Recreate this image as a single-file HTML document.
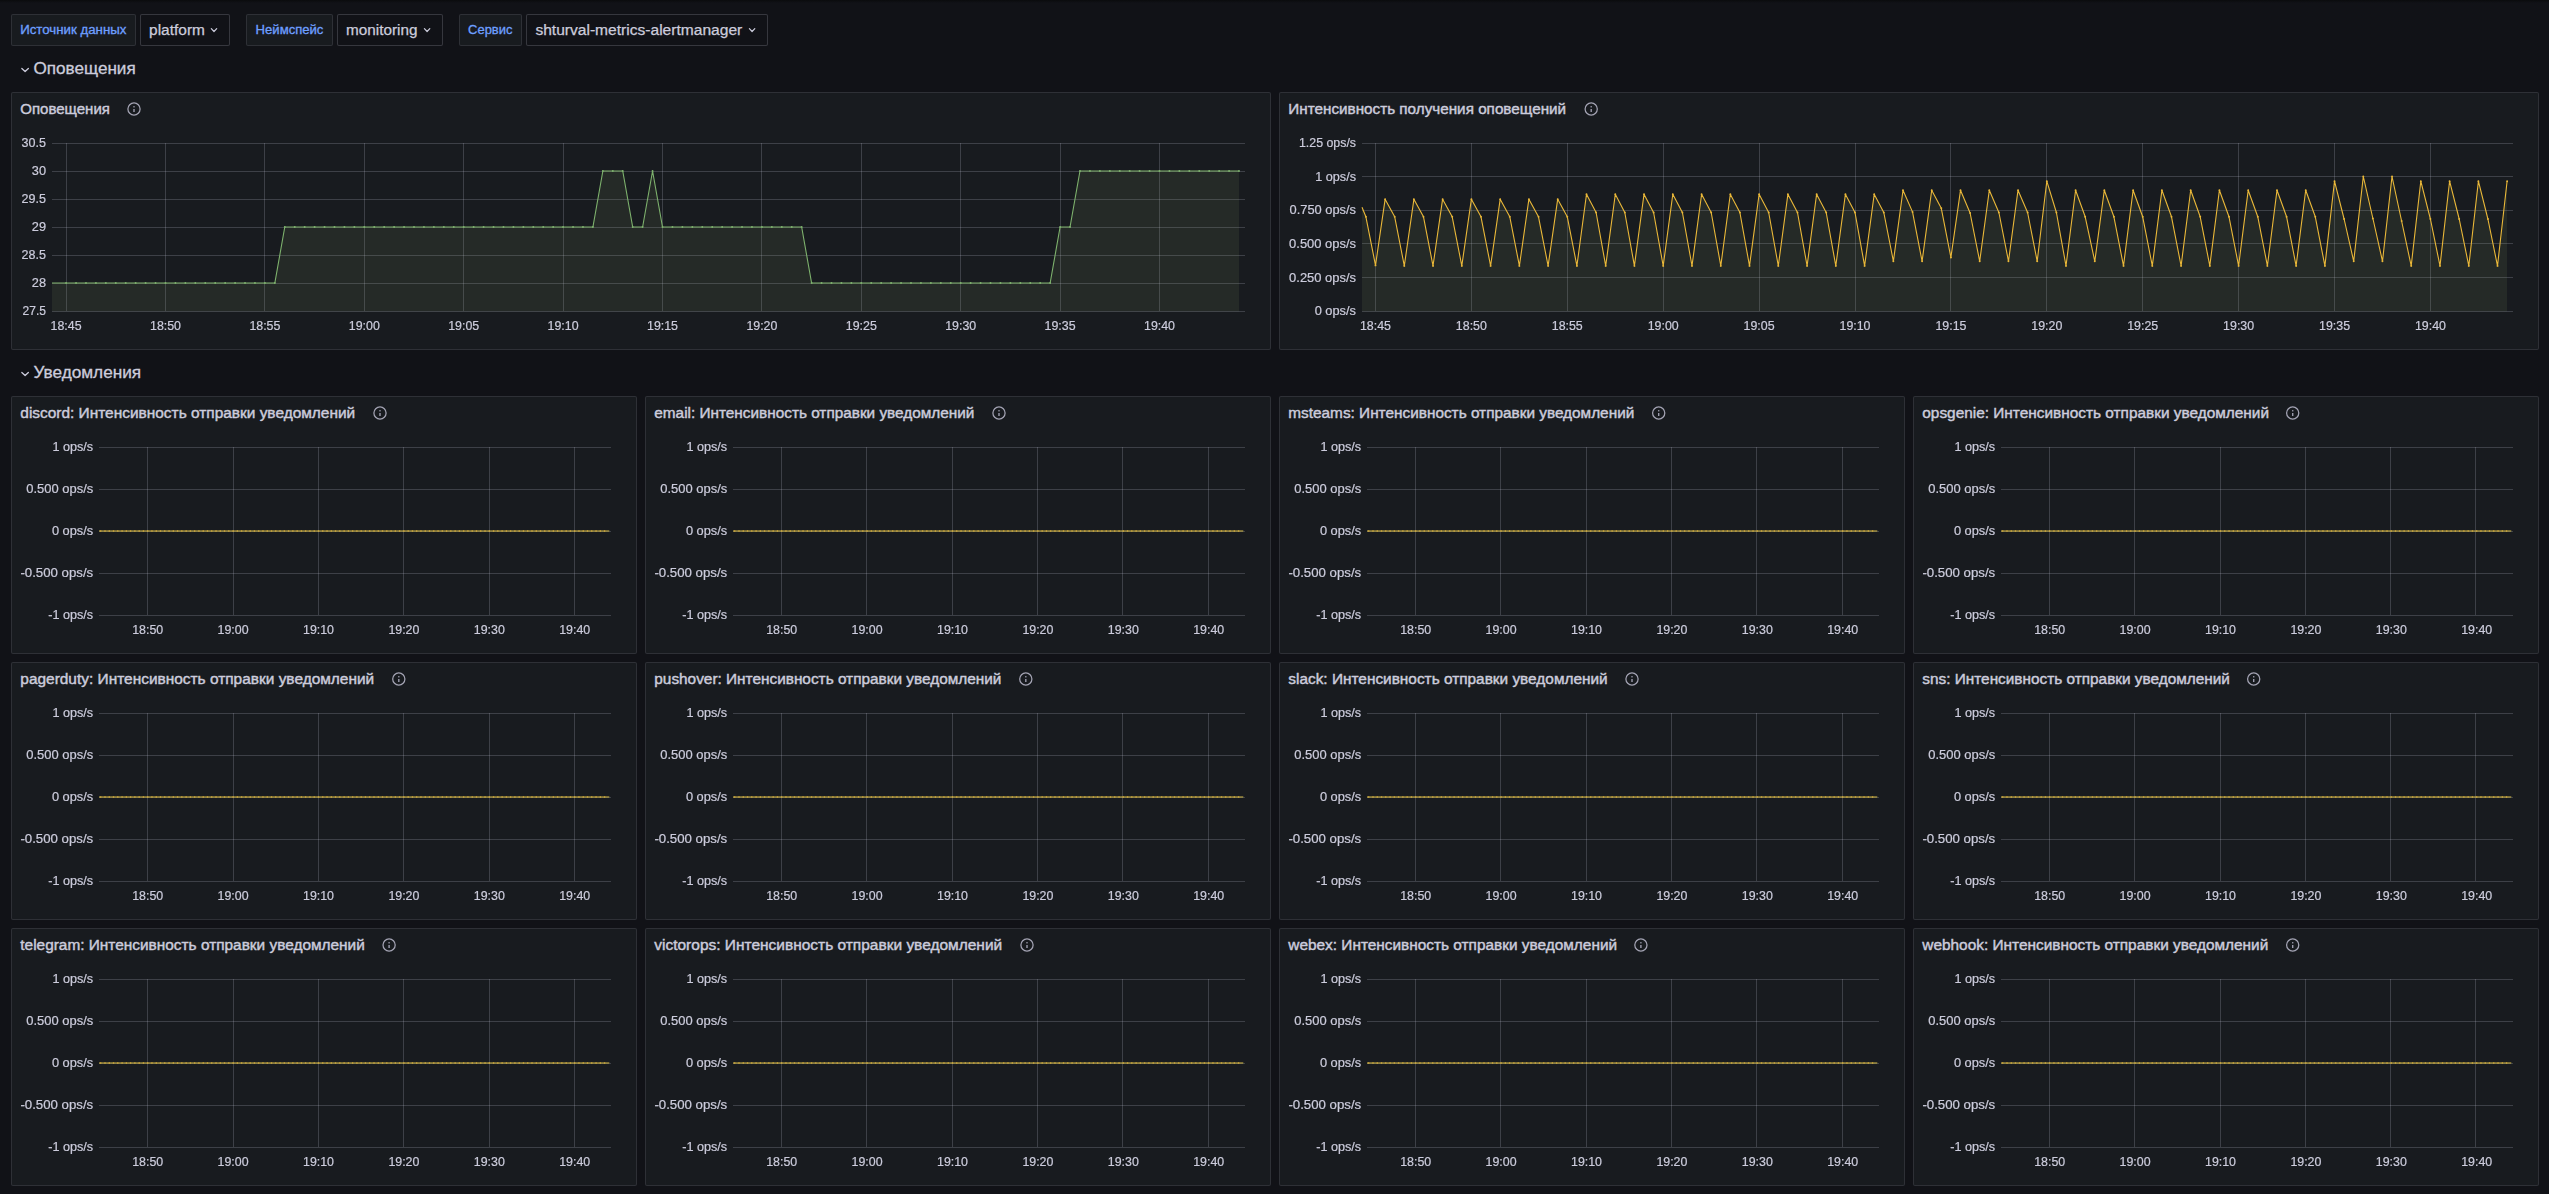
<!DOCTYPE html><html><head><meta charset="utf-8"><title>Grafana dashboard</title><style>
html,body{margin:0;padding:0;background:#111217;width:2549px;height:1194px;overflow:hidden;font-family:"Liberation Sans", sans-serif;}
.topshade{position:absolute;left:0;top:0;width:100%;height:3px;background:linear-gradient(#0a0b0d,#111217);}
.box{position:absolute;box-sizing:border-box;border-radius:2px;}
.lbl{background:#181b1f;border:1px solid rgba(204,204,220,0.12);}
.inp{background:#111217;border:1px solid rgba(204,204,220,0.2);}
.panel{position:absolute;box-sizing:border-box;background:#181b1f;border:1px solid rgba(204,204,220,0.12);border-radius:2px;}
svg{position:absolute;left:0;top:0;overflow:visible;}
text{font-family:"Liberation Sans", sans-serif;}
</style></head><body>
<div class="topshade"></div>
<div class="box lbl" style="left:11px;top:14px;width:125px;height:32px;"></div>
<div class="box inp" style="left:140px;top:14px;width:90px;height:32px;"></div>
<div class="box lbl" style="left:246px;top:14px;width:87px;height:32px;"></div>
<div class="box inp" style="left:337px;top:14px;width:106px;height:32px;"></div>
<div class="box lbl" style="left:459px;top:14px;width:63px;height:32px;"></div>
<div class="box inp" style="left:526px;top:14px;width:242px;height:32px;"></div>
<svg width="2549" height="1194" viewBox="0 0 2549 1194"><text x="20.20" y="34.20" font-size="12" fill="#6e9fff" stroke="#6e9fff" stroke-width="0.3" textLength="106.20" lengthAdjust="spacingAndGlyphs">Источник данных</text><text x="149.10" y="35.00" font-size="14" fill="#ccccdc" stroke="#ccccdc" stroke-width="0.25" textLength="55.80" lengthAdjust="spacingAndGlyphs">platform</text><path d="M211.30 28.6 L214.00 31.5 L216.70 28.6" fill="none" stroke="#ccccdc" stroke-width="1.2" stroke-linecap="round" stroke-linejoin="round"/><text x="255.60" y="34.20" font-size="12" fill="#6e9fff" stroke="#6e9fff" stroke-width="0.3" textLength="67.80" lengthAdjust="spacingAndGlyphs">Неймспейс</text><text x="346.00" y="35.00" font-size="14" fill="#ccccdc" stroke="#ccccdc" stroke-width="0.25" textLength="71.40" lengthAdjust="spacingAndGlyphs">monitoring</text><path d="M424.40 28.6 L427.10 31.5 L429.80 28.6" fill="none" stroke="#ccccdc" stroke-width="1.2" stroke-linecap="round" stroke-linejoin="round"/><text x="468.10" y="34.20" font-size="12" fill="#6e9fff" stroke="#6e9fff" stroke-width="0.3" textLength="44.30" lengthAdjust="spacingAndGlyphs">Сервис</text><text x="535.40" y="35.00" font-size="14" fill="#ccccdc" stroke="#ccccdc" stroke-width="0.25" textLength="206.90" lengthAdjust="spacingAndGlyphs">shturval-metrics-alertmanager</text><path d="M749.40 28.6 L752.10 31.5 L754.80 28.6" fill="none" stroke="#ccccdc" stroke-width="1.2" stroke-linecap="round" stroke-linejoin="round"/><path d="M21.85 68.55 L25.1 71.55 L28.35 68.55" fill="none" stroke="#ccccdc" stroke-width="1.3" stroke-linecap="round" stroke-linejoin="round"/><text x="33.50" y="73.80" font-size="16" fill="#ccccdc" stroke="#ccccdc" stroke-width="0.3" textLength="102.20" lengthAdjust="spacingAndGlyphs">Оповещения</text><path d="M21.85 372.55 L25.1 375.55 L28.35 372.55" fill="none" stroke="#ccccdc" stroke-width="1.3" stroke-linecap="round" stroke-linejoin="round"/><text x="33.50" y="377.80" font-size="16" fill="#ccccdc" stroke="#ccccdc" stroke-width="0.3" textLength="107.70" lengthAdjust="spacingAndGlyphs">Уведомления</text></svg>
<div class="panel" style="left:11px;top:92px;width:1260px;height:258px;"></div>
<svg width="2549" height="1194" style="left:0;top:0" viewBox="0 0 2549 1194"><text x="20.30" y="114.20" font-size="14" fill="#ccccdc" stroke="#ccccdc" stroke-width="0.4" textLength="89.60" lengthAdjust="spacingAndGlyphs">Оповещения</text><circle cx="134.00" cy="109.00" r="6.1" fill="none" stroke="#a4a4b4" stroke-width="1.25"/><rect x="133.30" y="109.00" width="1.4" height="3.0" fill="#9d9dae"/><rect x="133.30" y="106.10" width="1.4" height="1.3" fill="#9d9dae"/><line x1="52" y1="143.5" x2="1245" y2="143.5" stroke="rgba(204,204,220,0.21)" stroke-width="1"/><line x1="52" y1="171.5" x2="1245" y2="171.5" stroke="rgba(204,204,220,0.21)" stroke-width="1"/><line x1="52" y1="199.5" x2="1245" y2="199.5" stroke="rgba(204,204,220,0.21)" stroke-width="1"/><line x1="52" y1="227.5" x2="1245" y2="227.5" stroke="rgba(204,204,220,0.21)" stroke-width="1"/><line x1="52" y1="255.5" x2="1245" y2="255.5" stroke="rgba(204,204,220,0.21)" stroke-width="1"/><line x1="52" y1="283.5" x2="1245" y2="283.5" stroke="rgba(204,204,220,0.21)" stroke-width="1"/><line x1="52" y1="311.5" x2="1245" y2="311.5" stroke="rgba(204,204,220,0.21)" stroke-width="1"/><line x1="66.5" y1="143" x2="66.5" y2="311" stroke="rgba(204,204,220,0.21)" stroke-width="1"/><line x1="165.5" y1="143" x2="165.5" y2="311" stroke="rgba(204,204,220,0.21)" stroke-width="1"/><line x1="264.5" y1="143" x2="264.5" y2="311" stroke="rgba(204,204,220,0.21)" stroke-width="1"/><line x1="364.5" y1="143" x2="364.5" y2="311" stroke="rgba(204,204,220,0.21)" stroke-width="1"/><line x1="463.5" y1="143" x2="463.5" y2="311" stroke="rgba(204,204,220,0.21)" stroke-width="1"/><line x1="563.5" y1="143" x2="563.5" y2="311" stroke="rgba(204,204,220,0.21)" stroke-width="1"/><line x1="662.5" y1="143" x2="662.5" y2="311" stroke="rgba(204,204,220,0.21)" stroke-width="1"/><line x1="761.5" y1="143" x2="761.5" y2="311" stroke="rgba(204,204,220,0.21)" stroke-width="1"/><line x1="861.5" y1="143" x2="861.5" y2="311" stroke="rgba(204,204,220,0.21)" stroke-width="1"/><line x1="960.5" y1="143" x2="960.5" y2="311" stroke="rgba(204,204,220,0.21)" stroke-width="1"/><line x1="1060.5" y1="143" x2="1060.5" y2="311" stroke="rgba(204,204,220,0.21)" stroke-width="1"/><line x1="1159.5" y1="143" x2="1159.5" y2="311" stroke="rgba(204,204,220,0.21)" stroke-width="1"/><path d="M52.00 283.0 L56.16 283.0 L66.10 283.0 L76.04 283.0 L85.98 283.0 L95.92 283.0 L105.86 283.0 L115.80 283.0 L125.74 283.0 L135.68 283.0 L145.62 283.0 L155.56 283.0 L165.50 283.0 L175.44 283.0 L185.38 283.0 L195.32 283.0 L205.26 283.0 L215.20 283.0 L225.14 283.0 L235.08 283.0 L245.02 283.0 L254.96 283.0 L264.90 283.0 L274.84 283.0 L284.78 227.0 L294.72 227.0 L304.66 227.0 L314.60 227.0 L324.54 227.0 L334.48 227.0 L344.42 227.0 L354.36 227.0 L364.30 227.0 L374.24 227.0 L384.18 227.0 L394.12 227.0 L404.06 227.0 L414.00 227.0 L423.94 227.0 L433.88 227.0 L443.82 227.0 L453.76 227.0 L463.70 227.0 L473.64 227.0 L483.58 227.0 L493.52 227.0 L503.46 227.0 L513.40 227.0 L523.34 227.0 L533.28 227.0 L543.22 227.0 L553.16 227.0 L563.10 227.0 L573.04 227.0 L582.98 227.0 L592.92 227.0 L602.86 171.0 L612.80 171.0 L622.74 171.0 L632.68 227.0 L642.62 227.0 L652.56 171.0 L662.50 227.0 L672.44 227.0 L682.38 227.0 L692.32 227.0 L702.26 227.0 L712.20 227.0 L722.14 227.0 L732.08 227.0 L742.02 227.0 L751.96 227.0 L761.90 227.0 L771.84 227.0 L781.78 227.0 L791.72 227.0 L801.66 227.0 L811.60 283.0 L821.54 283.0 L831.48 283.0 L841.42 283.0 L851.36 283.0 L861.30 283.0 L871.24 283.0 L881.18 283.0 L891.12 283.0 L901.06 283.0 L911.00 283.0 L920.94 283.0 L930.88 283.0 L940.82 283.0 L950.76 283.0 L960.70 283.0 L970.64 283.0 L980.58 283.0 L990.52 283.0 L1000.46 283.0 L1010.40 283.0 L1020.34 283.0 L1030.28 283.0 L1040.22 283.0 L1050.16 283.0 L1060.10 227.0 L1070.04 227.0 L1079.98 171.0 L1089.92 171.0 L1099.86 171.0 L1109.80 171.0 L1119.74 171.0 L1129.68 171.0 L1139.62 171.0 L1149.56 171.0 L1159.50 171.0 L1169.44 171.0 L1179.38 171.0 L1189.32 171.0 L1199.26 171.0 L1209.20 171.0 L1219.14 171.0 L1229.08 171.0 L1239.02 171.0 L1239.02 311.5 L52 311.5 Z" fill="rgba(154,177,121,0.10)" stroke="none"/><path d="M52.00 283.0 L56.16 283.0 L66.10 283.0 L76.04 283.0 L85.98 283.0 L95.92 283.0 L105.86 283.0 L115.80 283.0 L125.74 283.0 L135.68 283.0 L145.62 283.0 L155.56 283.0 L165.50 283.0 L175.44 283.0 L185.38 283.0 L195.32 283.0 L205.26 283.0 L215.20 283.0 L225.14 283.0 L235.08 283.0 L245.02 283.0 L254.96 283.0 L264.90 283.0 L274.84 283.0 L284.78 227.0 L294.72 227.0 L304.66 227.0 L314.60 227.0 L324.54 227.0 L334.48 227.0 L344.42 227.0 L354.36 227.0 L364.30 227.0 L374.24 227.0 L384.18 227.0 L394.12 227.0 L404.06 227.0 L414.00 227.0 L423.94 227.0 L433.88 227.0 L443.82 227.0 L453.76 227.0 L463.70 227.0 L473.64 227.0 L483.58 227.0 L493.52 227.0 L503.46 227.0 L513.40 227.0 L523.34 227.0 L533.28 227.0 L543.22 227.0 L553.16 227.0 L563.10 227.0 L573.04 227.0 L582.98 227.0 L592.92 227.0 L602.86 171.0 L612.80 171.0 L622.74 171.0 L632.68 227.0 L642.62 227.0 L652.56 171.0 L662.50 227.0 L672.44 227.0 L682.38 227.0 L692.32 227.0 L702.26 227.0 L712.20 227.0 L722.14 227.0 L732.08 227.0 L742.02 227.0 L751.96 227.0 L761.90 227.0 L771.84 227.0 L781.78 227.0 L791.72 227.0 L801.66 227.0 L811.60 283.0 L821.54 283.0 L831.48 283.0 L841.42 283.0 L851.36 283.0 L861.30 283.0 L871.24 283.0 L881.18 283.0 L891.12 283.0 L901.06 283.0 L911.00 283.0 L920.94 283.0 L930.88 283.0 L940.82 283.0 L950.76 283.0 L960.70 283.0 L970.64 283.0 L980.58 283.0 L990.52 283.0 L1000.46 283.0 L1010.40 283.0 L1020.34 283.0 L1030.28 283.0 L1040.22 283.0 L1050.16 283.0 L1060.10 227.0 L1070.04 227.0 L1079.98 171.0 L1089.92 171.0 L1099.86 171.0 L1109.80 171.0 L1119.74 171.0 L1129.68 171.0 L1139.62 171.0 L1149.56 171.0 L1159.50 171.0 L1169.44 171.0 L1179.38 171.0 L1189.32 171.0 L1199.26 171.0 L1209.20 171.0 L1219.14 171.0 L1229.08 171.0 L1239.02 171.0" fill="none" stroke="#7eb26d" stroke-width="1.1" stroke-linejoin="round"/><g fill="#7eb26d"><circle cx="66.10" cy="283.0" r="0.95"/><circle cx="76.04" cy="283.0" r="0.95"/><circle cx="85.98" cy="283.0" r="0.95"/><circle cx="95.92" cy="283.0" r="0.95"/><circle cx="105.86" cy="283.0" r="0.95"/><circle cx="115.80" cy="283.0" r="0.95"/><circle cx="125.74" cy="283.0" r="0.95"/><circle cx="135.68" cy="283.0" r="0.95"/><circle cx="145.62" cy="283.0" r="0.95"/><circle cx="155.56" cy="283.0" r="0.95"/><circle cx="165.50" cy="283.0" r="0.95"/><circle cx="175.44" cy="283.0" r="0.95"/><circle cx="185.38" cy="283.0" r="0.95"/><circle cx="195.32" cy="283.0" r="0.95"/><circle cx="205.26" cy="283.0" r="0.95"/><circle cx="215.20" cy="283.0" r="0.95"/><circle cx="225.14" cy="283.0" r="0.95"/><circle cx="235.08" cy="283.0" r="0.95"/><circle cx="245.02" cy="283.0" r="0.95"/><circle cx="254.96" cy="283.0" r="0.95"/><circle cx="264.90" cy="283.0" r="0.95"/><circle cx="274.84" cy="283.0" r="0.95"/><circle cx="284.78" cy="227.0" r="0.95"/><circle cx="294.72" cy="227.0" r="0.95"/><circle cx="304.66" cy="227.0" r="0.95"/><circle cx="314.60" cy="227.0" r="0.95"/><circle cx="324.54" cy="227.0" r="0.95"/><circle cx="334.48" cy="227.0" r="0.95"/><circle cx="344.42" cy="227.0" r="0.95"/><circle cx="354.36" cy="227.0" r="0.95"/><circle cx="364.30" cy="227.0" r="0.95"/><circle cx="374.24" cy="227.0" r="0.95"/><circle cx="384.18" cy="227.0" r="0.95"/><circle cx="394.12" cy="227.0" r="0.95"/><circle cx="404.06" cy="227.0" r="0.95"/><circle cx="414.00" cy="227.0" r="0.95"/><circle cx="423.94" cy="227.0" r="0.95"/><circle cx="433.88" cy="227.0" r="0.95"/><circle cx="443.82" cy="227.0" r="0.95"/><circle cx="453.76" cy="227.0" r="0.95"/><circle cx="463.70" cy="227.0" r="0.95"/><circle cx="473.64" cy="227.0" r="0.95"/><circle cx="483.58" cy="227.0" r="0.95"/><circle cx="493.52" cy="227.0" r="0.95"/><circle cx="503.46" cy="227.0" r="0.95"/><circle cx="513.40" cy="227.0" r="0.95"/><circle cx="523.34" cy="227.0" r="0.95"/><circle cx="533.28" cy="227.0" r="0.95"/><circle cx="543.22" cy="227.0" r="0.95"/><circle cx="553.16" cy="227.0" r="0.95"/><circle cx="563.10" cy="227.0" r="0.95"/><circle cx="573.04" cy="227.0" r="0.95"/><circle cx="582.98" cy="227.0" r="0.95"/><circle cx="592.92" cy="227.0" r="0.95"/><circle cx="602.86" cy="171.0" r="0.95"/><circle cx="612.80" cy="171.0" r="0.95"/><circle cx="622.74" cy="171.0" r="0.95"/><circle cx="632.68" cy="227.0" r="0.95"/><circle cx="642.62" cy="227.0" r="0.95"/><circle cx="652.56" cy="171.0" r="0.95"/><circle cx="662.50" cy="227.0" r="0.95"/><circle cx="672.44" cy="227.0" r="0.95"/><circle cx="682.38" cy="227.0" r="0.95"/><circle cx="692.32" cy="227.0" r="0.95"/><circle cx="702.26" cy="227.0" r="0.95"/><circle cx="712.20" cy="227.0" r="0.95"/><circle cx="722.14" cy="227.0" r="0.95"/><circle cx="732.08" cy="227.0" r="0.95"/><circle cx="742.02" cy="227.0" r="0.95"/><circle cx="751.96" cy="227.0" r="0.95"/><circle cx="761.90" cy="227.0" r="0.95"/><circle cx="771.84" cy="227.0" r="0.95"/><circle cx="781.78" cy="227.0" r="0.95"/><circle cx="791.72" cy="227.0" r="0.95"/><circle cx="801.66" cy="227.0" r="0.95"/><circle cx="811.60" cy="283.0" r="0.95"/><circle cx="821.54" cy="283.0" r="0.95"/><circle cx="831.48" cy="283.0" r="0.95"/><circle cx="841.42" cy="283.0" r="0.95"/><circle cx="851.36" cy="283.0" r="0.95"/><circle cx="861.30" cy="283.0" r="0.95"/><circle cx="871.24" cy="283.0" r="0.95"/><circle cx="881.18" cy="283.0" r="0.95"/><circle cx="891.12" cy="283.0" r="0.95"/><circle cx="901.06" cy="283.0" r="0.95"/><circle cx="911.00" cy="283.0" r="0.95"/><circle cx="920.94" cy="283.0" r="0.95"/><circle cx="930.88" cy="283.0" r="0.95"/><circle cx="940.82" cy="283.0" r="0.95"/><circle cx="950.76" cy="283.0" r="0.95"/><circle cx="960.70" cy="283.0" r="0.95"/><circle cx="970.64" cy="283.0" r="0.95"/><circle cx="980.58" cy="283.0" r="0.95"/><circle cx="990.52" cy="283.0" r="0.95"/><circle cx="1000.46" cy="283.0" r="0.95"/><circle cx="1010.40" cy="283.0" r="0.95"/><circle cx="1020.34" cy="283.0" r="0.95"/><circle cx="1030.28" cy="283.0" r="0.95"/><circle cx="1040.22" cy="283.0" r="0.95"/><circle cx="1050.16" cy="283.0" r="0.95"/><circle cx="1060.10" cy="227.0" r="0.95"/><circle cx="1070.04" cy="227.0" r="0.95"/><circle cx="1079.98" cy="171.0" r="0.95"/><circle cx="1089.92" cy="171.0" r="0.95"/><circle cx="1099.86" cy="171.0" r="0.95"/><circle cx="1109.80" cy="171.0" r="0.95"/><circle cx="1119.74" cy="171.0" r="0.95"/><circle cx="1129.68" cy="171.0" r="0.95"/><circle cx="1139.62" cy="171.0" r="0.95"/><circle cx="1149.56" cy="171.0" r="0.95"/><circle cx="1159.50" cy="171.0" r="0.95"/><circle cx="1169.44" cy="171.0" r="0.95"/><circle cx="1179.38" cy="171.0" r="0.95"/><circle cx="1189.32" cy="171.0" r="0.95"/><circle cx="1199.26" cy="171.0" r="0.95"/><circle cx="1209.20" cy="171.0" r="0.95"/><circle cx="1219.14" cy="171.0" r="0.95"/><circle cx="1229.08" cy="171.0" r="0.95"/><circle cx="1239.02" cy="171.0" r="0.95"/></g></svg>
<div class="panel" style="left:1279px;top:92px;width:1260px;height:258px;"></div>
<svg width="2549" height="1194" style="left:0;top:0" viewBox="0 0 2549 1194"><text x="1288.30" y="114.20" font-size="14" fill="#ccccdc" stroke="#ccccdc" stroke-width="0.4" textLength="277.80" lengthAdjust="spacingAndGlyphs">Интенсивность получения оповещений</text><circle cx="1591.20" cy="109.00" r="6.1" fill="none" stroke="#a4a4b4" stroke-width="1.25"/><rect x="1590.50" y="109.00" width="1.4" height="3.0" fill="#9d9dae"/><rect x="1590.50" y="106.10" width="1.4" height="1.3" fill="#9d9dae"/><line x1="1362" y1="143.5" x2="2513" y2="143.5" stroke="rgba(204,204,220,0.21)" stroke-width="1"/><line x1="1362" y1="176.5" x2="2513" y2="176.5" stroke="rgba(204,204,220,0.21)" stroke-width="1"/><line x1="1362" y1="210.5" x2="2513" y2="210.5" stroke="rgba(204,204,220,0.21)" stroke-width="1"/><line x1="1362" y1="243.5" x2="2513" y2="243.5" stroke="rgba(204,204,220,0.21)" stroke-width="1"/><line x1="1362" y1="277.5" x2="2513" y2="277.5" stroke="rgba(204,204,220,0.21)" stroke-width="1"/><line x1="1362" y1="311.5" x2="2513" y2="311.5" stroke="rgba(204,204,220,0.21)" stroke-width="1"/><line x1="1375.5" y1="143" x2="1375.5" y2="311" stroke="rgba(204,204,220,0.21)" stroke-width="1"/><line x1="1471.5" y1="143" x2="1471.5" y2="311" stroke="rgba(204,204,220,0.21)" stroke-width="1"/><line x1="1567.5" y1="143" x2="1567.5" y2="311" stroke="rgba(204,204,220,0.21)" stroke-width="1"/><line x1="1663.5" y1="143" x2="1663.5" y2="311" stroke="rgba(204,204,220,0.21)" stroke-width="1"/><line x1="1759.5" y1="143" x2="1759.5" y2="311" stroke="rgba(204,204,220,0.21)" stroke-width="1"/><line x1="1855.5" y1="143" x2="1855.5" y2="311" stroke="rgba(204,204,220,0.21)" stroke-width="1"/><line x1="1950.5" y1="143" x2="1950.5" y2="311" stroke="rgba(204,204,220,0.21)" stroke-width="1"/><line x1="2046.5" y1="143" x2="2046.5" y2="311" stroke="rgba(204,204,220,0.21)" stroke-width="1"/><line x1="2142.5" y1="143" x2="2142.5" y2="311" stroke="rgba(204,204,220,0.21)" stroke-width="1"/><line x1="2238.5" y1="143" x2="2238.5" y2="311" stroke="rgba(204,204,220,0.21)" stroke-width="1"/><line x1="2334.5" y1="143" x2="2334.5" y2="311" stroke="rgba(204,204,220,0.21)" stroke-width="1"/><line x1="2430.5" y1="143" x2="2430.5" y2="311" stroke="rgba(204,204,220,0.21)" stroke-width="1"/><path d="M1362.0 207.3 L1365.9 216.8 L1375.5 265.4 L1385.1 199.3 L1394.7 216.8 L1404.3 265.9 L1413.9 199.3 L1423.5 216.8 L1433.0 265.9 L1442.6 199.2 L1452.2 216.8 L1461.8 265.9 L1471.4 199.2 L1481.0 216.8 L1490.6 265.9 L1500.2 199.2 L1509.8 216.8 L1519.4 265.9 L1528.9 199.2 L1538.5 216.8 L1548.1 265.9 L1557.7 199.2 L1567.3 216.8 L1576.9 265.9 L1586.5 194.3 L1596.1 212.5 L1605.7 265.9 L1615.3 194.3 L1624.8 212.5 L1634.4 265.9 L1644.0 194.3 L1653.6 212.5 L1663.2 265.9 L1672.8 194.3 L1682.4 212.5 L1692.0 265.9 L1701.6 194.3 L1711.2 212.5 L1720.8 265.9 L1730.3 194.3 L1739.9 212.5 L1749.5 265.9 L1759.1 194.3 L1768.7 212.5 L1778.3 265.9 L1787.9 194.3 L1797.5 212.5 L1807.1 265.9 L1816.6 194.3 L1826.2 212.5 L1835.8 265.9 L1845.4 194.3 L1855.0 212.5 L1864.6 265.9 L1874.2 194.3 L1883.8 212.5 L1893.4 261.3 L1903.0 190.3 L1912.5 211.9 L1922.1 261.3 L1931.7 190.3 L1941.3 208.3 L1950.9 257.5 L1960.5 190.3 L1970.1 213.0 L1979.7 261.3 L1989.3 190.3 L1998.9 212.5 L2008.5 261.3 L2018.0 190.3 L2027.6 212.5 L2037.2 261.3 L2046.8 181.2 L2056.4 212.5 L2066.0 265.9 L2075.6 190.3 L2085.2 216.8 L2094.8 261.3 L2104.3 190.3 L2113.9 216.8 L2123.5 265.9 L2133.1 190.3 L2142.7 216.8 L2152.3 265.9 L2161.9 190.3 L2171.5 216.8 L2181.1 265.9 L2190.7 190.3 L2200.2 216.8 L2209.8 265.9 L2219.4 190.3 L2229.0 216.8 L2238.6 265.9 L2248.2 190.3 L2257.8 216.8 L2267.4 265.9 L2277.0 190.3 L2286.6 216.8 L2296.1 265.9 L2305.7 190.3 L2315.3 216.8 L2324.9 265.9 L2334.5 181.2 L2344.1 219.0 L2353.7 261.3 L2363.3 176.5 L2372.9 218.5 L2382.5 261.3 L2392.0 176.5 L2401.6 221.0 L2411.2 265.9 L2420.8 181.2 L2430.4 219.0 L2440.0 265.9 L2449.6 181.2 L2459.2 219.0 L2468.8 265.9 L2478.4 181.2 L2487.9 219.0 L2497.5 265.9 L2507.1 181.2 L2507.1 311.5 L1362 311.5 Z" fill="rgba(154,177,121,0.10)" stroke="none"/><path d="M1362.0 207.3 L1365.9 216.8 L1375.5 265.4 L1385.1 199.3 L1394.7 216.8 L1404.3 265.9 L1413.9 199.3 L1423.5 216.8 L1433.0 265.9 L1442.6 199.2 L1452.2 216.8 L1461.8 265.9 L1471.4 199.2 L1481.0 216.8 L1490.6 265.9 L1500.2 199.2 L1509.8 216.8 L1519.4 265.9 L1528.9 199.2 L1538.5 216.8 L1548.1 265.9 L1557.7 199.2 L1567.3 216.8 L1576.9 265.9 L1586.5 194.3 L1596.1 212.5 L1605.7 265.9 L1615.3 194.3 L1624.8 212.5 L1634.4 265.9 L1644.0 194.3 L1653.6 212.5 L1663.2 265.9 L1672.8 194.3 L1682.4 212.5 L1692.0 265.9 L1701.6 194.3 L1711.2 212.5 L1720.8 265.9 L1730.3 194.3 L1739.9 212.5 L1749.5 265.9 L1759.1 194.3 L1768.7 212.5 L1778.3 265.9 L1787.9 194.3 L1797.5 212.5 L1807.1 265.9 L1816.6 194.3 L1826.2 212.5 L1835.8 265.9 L1845.4 194.3 L1855.0 212.5 L1864.6 265.9 L1874.2 194.3 L1883.8 212.5 L1893.4 261.3 L1903.0 190.3 L1912.5 211.9 L1922.1 261.3 L1931.7 190.3 L1941.3 208.3 L1950.9 257.5 L1960.5 190.3 L1970.1 213.0 L1979.7 261.3 L1989.3 190.3 L1998.9 212.5 L2008.5 261.3 L2018.0 190.3 L2027.6 212.5 L2037.2 261.3 L2046.8 181.2 L2056.4 212.5 L2066.0 265.9 L2075.6 190.3 L2085.2 216.8 L2094.8 261.3 L2104.3 190.3 L2113.9 216.8 L2123.5 265.9 L2133.1 190.3 L2142.7 216.8 L2152.3 265.9 L2161.9 190.3 L2171.5 216.8 L2181.1 265.9 L2190.7 190.3 L2200.2 216.8 L2209.8 265.9 L2219.4 190.3 L2229.0 216.8 L2238.6 265.9 L2248.2 190.3 L2257.8 216.8 L2267.4 265.9 L2277.0 190.3 L2286.6 216.8 L2296.1 265.9 L2305.7 190.3 L2315.3 216.8 L2324.9 265.9 L2334.5 181.2 L2344.1 219.0 L2353.7 261.3 L2363.3 176.5 L2372.9 218.5 L2382.5 261.3 L2392.0 176.5 L2401.6 221.0 L2411.2 265.9 L2420.8 181.2 L2430.4 219.0 L2440.0 265.9 L2449.6 181.2 L2459.2 219.0 L2468.8 265.9 L2478.4 181.2 L2487.9 219.0 L2497.5 265.9 L2507.1 181.2" fill="none" stroke="#eab839" stroke-width="1.1" stroke-linejoin="round"/><g fill="#eab839"><circle cx="1365.90" cy="216.8" r="0.95"/><circle cx="1375.50" cy="265.4" r="0.95"/><circle cx="1385.10" cy="199.3" r="0.95"/><circle cx="1394.69" cy="216.8" r="0.95"/><circle cx="1404.28" cy="265.9" r="0.95"/><circle cx="1413.87" cy="199.3" r="0.95"/><circle cx="1423.46" cy="216.8" r="0.95"/><circle cx="1433.05" cy="265.9" r="0.95"/><circle cx="1442.64" cy="199.2" r="0.95"/><circle cx="1452.23" cy="216.8" r="0.95"/><circle cx="1461.82" cy="265.9" r="0.95"/><circle cx="1471.41" cy="199.2" r="0.95"/><circle cx="1481.00" cy="216.8" r="0.95"/><circle cx="1490.59" cy="265.9" r="0.95"/><circle cx="1500.18" cy="199.2" r="0.95"/><circle cx="1509.77" cy="216.8" r="0.95"/><circle cx="1519.36" cy="265.9" r="0.95"/><circle cx="1528.95" cy="199.2" r="0.95"/><circle cx="1538.54" cy="216.8" r="0.95"/><circle cx="1548.13" cy="265.9" r="0.95"/><circle cx="1557.72" cy="199.2" r="0.95"/><circle cx="1567.31" cy="216.8" r="0.95"/><circle cx="1576.90" cy="265.9" r="0.95"/><circle cx="1586.49" cy="194.3" r="0.95"/><circle cx="1596.08" cy="212.5" r="0.95"/><circle cx="1605.67" cy="265.9" r="0.95"/><circle cx="1615.26" cy="194.3" r="0.95"/><circle cx="1624.85" cy="212.5" r="0.95"/><circle cx="1634.44" cy="265.9" r="0.95"/><circle cx="1644.03" cy="194.3" r="0.95"/><circle cx="1653.62" cy="212.5" r="0.95"/><circle cx="1663.21" cy="265.9" r="0.95"/><circle cx="1672.80" cy="194.3" r="0.95"/><circle cx="1682.39" cy="212.5" r="0.95"/><circle cx="1691.98" cy="265.9" r="0.95"/><circle cx="1701.57" cy="194.3" r="0.95"/><circle cx="1711.16" cy="212.5" r="0.95"/><circle cx="1720.75" cy="265.9" r="0.95"/><circle cx="1730.34" cy="194.3" r="0.95"/><circle cx="1739.93" cy="212.5" r="0.95"/><circle cx="1749.52" cy="265.9" r="0.95"/><circle cx="1759.11" cy="194.3" r="0.95"/><circle cx="1768.70" cy="212.5" r="0.95"/><circle cx="1778.29" cy="265.9" r="0.95"/><circle cx="1787.88" cy="194.3" r="0.95"/><circle cx="1797.47" cy="212.5" r="0.95"/><circle cx="1807.06" cy="265.9" r="0.95"/><circle cx="1816.65" cy="194.3" r="0.95"/><circle cx="1826.24" cy="212.5" r="0.95"/><circle cx="1835.83" cy="265.9" r="0.95"/><circle cx="1845.42" cy="194.3" r="0.95"/><circle cx="1855.01" cy="212.5" r="0.95"/><circle cx="1864.60" cy="265.9" r="0.95"/><circle cx="1874.19" cy="194.3" r="0.95"/><circle cx="1883.78" cy="212.5" r="0.95"/><circle cx="1893.37" cy="261.3" r="0.95"/><circle cx="1902.96" cy="190.3" r="0.95"/><circle cx="1912.55" cy="211.9" r="0.95"/><circle cx="1922.14" cy="261.3" r="0.95"/><circle cx="1931.73" cy="190.3" r="0.95"/><circle cx="1941.32" cy="208.3" r="0.95"/><circle cx="1950.91" cy="257.5" r="0.95"/><circle cx="1960.50" cy="190.3" r="0.95"/><circle cx="1970.09" cy="213.0" r="0.95"/><circle cx="1979.68" cy="261.3" r="0.95"/><circle cx="1989.27" cy="190.3" r="0.95"/><circle cx="1998.86" cy="212.5" r="0.95"/><circle cx="2008.45" cy="261.3" r="0.95"/><circle cx="2018.04" cy="190.3" r="0.95"/><circle cx="2027.63" cy="212.5" r="0.95"/><circle cx="2037.22" cy="261.3" r="0.95"/><circle cx="2046.81" cy="181.2" r="0.95"/><circle cx="2056.40" cy="212.5" r="0.95"/><circle cx="2065.99" cy="265.9" r="0.95"/><circle cx="2075.58" cy="190.3" r="0.95"/><circle cx="2085.17" cy="216.8" r="0.95"/><circle cx="2094.76" cy="261.3" r="0.95"/><circle cx="2104.35" cy="190.3" r="0.95"/><circle cx="2113.94" cy="216.8" r="0.95"/><circle cx="2123.53" cy="265.9" r="0.95"/><circle cx="2133.12" cy="190.3" r="0.95"/><circle cx="2142.71" cy="216.8" r="0.95"/><circle cx="2152.30" cy="265.9" r="0.95"/><circle cx="2161.89" cy="190.3" r="0.95"/><circle cx="2171.48" cy="216.8" r="0.95"/><circle cx="2181.07" cy="265.9" r="0.95"/><circle cx="2190.66" cy="190.3" r="0.95"/><circle cx="2200.25" cy="216.8" r="0.95"/><circle cx="2209.84" cy="265.9" r="0.95"/><circle cx="2219.43" cy="190.3" r="0.95"/><circle cx="2229.02" cy="216.8" r="0.95"/><circle cx="2238.61" cy="265.9" r="0.95"/><circle cx="2248.20" cy="190.3" r="0.95"/><circle cx="2257.79" cy="216.8" r="0.95"/><circle cx="2267.38" cy="265.9" r="0.95"/><circle cx="2276.97" cy="190.3" r="0.95"/><circle cx="2286.56" cy="216.8" r="0.95"/><circle cx="2296.15" cy="265.9" r="0.95"/><circle cx="2305.74" cy="190.3" r="0.95"/><circle cx="2315.33" cy="216.8" r="0.95"/><circle cx="2324.92" cy="265.9" r="0.95"/><circle cx="2334.51" cy="181.2" r="0.95"/><circle cx="2344.10" cy="219.0" r="0.95"/><circle cx="2353.69" cy="261.3" r="0.95"/><circle cx="2363.28" cy="176.5" r="0.95"/><circle cx="2372.87" cy="218.5" r="0.95"/><circle cx="2382.46" cy="261.3" r="0.95"/><circle cx="2392.05" cy="176.5" r="0.95"/><circle cx="2401.64" cy="221.0" r="0.95"/><circle cx="2411.23" cy="265.9" r="0.95"/><circle cx="2420.82" cy="181.2" r="0.95"/><circle cx="2430.41" cy="219.0" r="0.95"/><circle cx="2440.00" cy="265.9" r="0.95"/><circle cx="2449.59" cy="181.2" r="0.95"/><circle cx="2459.18" cy="219.0" r="0.95"/><circle cx="2468.77" cy="265.9" r="0.95"/><circle cx="2478.36" cy="181.2" r="0.95"/><circle cx="2487.95" cy="219.0" r="0.95"/><circle cx="2497.54" cy="265.9" r="0.95"/><circle cx="2507.13" cy="181.2" r="0.95"/></g></svg>
<div class="panel" style="left:11px;top:396px;width:626px;height:258px;"></div>
<svg width="2549" height="1194" style="left:0;top:0" viewBox="0 0 2549 1194"><text x="20.30" y="418.20" font-size="14" fill="#ccccdc" stroke="#ccccdc" stroke-width="0.4" textLength="334.90" lengthAdjust="spacingAndGlyphs">discord: Интенсивность отправки уведомлений</text><circle cx="380.00" cy="413.00" r="6.1" fill="none" stroke="#a4a4b4" stroke-width="1.25"/><rect x="379.30" y="413.00" width="1.4" height="3.0" fill="#9d9dae"/><rect x="379.30" y="410.10" width="1.4" height="1.3" fill="#9d9dae"/><line x1="99" y1="447.5" x2="611" y2="447.5" stroke="rgba(204,204,220,0.21)" stroke-width="1"/><line x1="99" y1="489.5" x2="611" y2="489.5" stroke="rgba(204,204,220,0.21)" stroke-width="1"/><line x1="99" y1="531.5" x2="611" y2="531.5" stroke="rgba(204,204,220,0.21)" stroke-width="1"/><line x1="99" y1="573.5" x2="611" y2="573.5" stroke="rgba(204,204,220,0.21)" stroke-width="1"/><line x1="99" y1="615.5" x2="611" y2="615.5" stroke="rgba(204,204,220,0.21)" stroke-width="1"/><line x1="147.5" y1="447" x2="147.5" y2="615" stroke="rgba(204,204,220,0.21)" stroke-width="1"/><line x1="233.5" y1="447" x2="233.5" y2="615" stroke="rgba(204,204,220,0.21)" stroke-width="1"/><line x1="318.5" y1="447" x2="318.5" y2="615" stroke="rgba(204,204,220,0.21)" stroke-width="1"/><line x1="403.5" y1="447" x2="403.5" y2="615" stroke="rgba(204,204,220,0.21)" stroke-width="1"/><line x1="489.5" y1="447" x2="489.5" y2="615" stroke="rgba(204,204,220,0.21)" stroke-width="1"/><line x1="574.5" y1="447" x2="574.5" y2="615" stroke="rgba(204,204,220,0.21)" stroke-width="1"/><line x1="99" y1="531.0" x2="609.3" y2="531.0" stroke="#dcbf48" stroke-width="1.15"/><path fill="none" stroke="#eab839" stroke-width="1.6" stroke-opacity="0.8" stroke-linecap="round" stroke-dasharray="0 4.27" d="M100.73 531.0 L608.50 531.0"/></svg>
<div class="panel" style="left:645px;top:396px;width:626px;height:258px;"></div>
<svg width="2549" height="1194" style="left:0;top:0" viewBox="0 0 2549 1194"><text x="654.30" y="418.20" font-size="14" fill="#ccccdc" stroke="#ccccdc" stroke-width="0.4" textLength="320.10" lengthAdjust="spacingAndGlyphs">email: Интенсивность отправки уведомлений</text><circle cx="999.00" cy="413.00" r="6.1" fill="none" stroke="#a4a4b4" stroke-width="1.25"/><rect x="998.30" y="413.00" width="1.4" height="3.0" fill="#9d9dae"/><rect x="998.30" y="410.10" width="1.4" height="1.3" fill="#9d9dae"/><line x1="733" y1="447.5" x2="1245" y2="447.5" stroke="rgba(204,204,220,0.21)" stroke-width="1"/><line x1="733" y1="489.5" x2="1245" y2="489.5" stroke="rgba(204,204,220,0.21)" stroke-width="1"/><line x1="733" y1="531.5" x2="1245" y2="531.5" stroke="rgba(204,204,220,0.21)" stroke-width="1"/><line x1="733" y1="573.5" x2="1245" y2="573.5" stroke="rgba(204,204,220,0.21)" stroke-width="1"/><line x1="733" y1="615.5" x2="1245" y2="615.5" stroke="rgba(204,204,220,0.21)" stroke-width="1"/><line x1="781.5" y1="447" x2="781.5" y2="615" stroke="rgba(204,204,220,0.21)" stroke-width="1"/><line x1="866.5" y1="447" x2="866.5" y2="615" stroke="rgba(204,204,220,0.21)" stroke-width="1"/><line x1="952.5" y1="447" x2="952.5" y2="615" stroke="rgba(204,204,220,0.21)" stroke-width="1"/><line x1="1037.5" y1="447" x2="1037.5" y2="615" stroke="rgba(204,204,220,0.21)" stroke-width="1"/><line x1="1122.5" y1="447" x2="1122.5" y2="615" stroke="rgba(204,204,220,0.21)" stroke-width="1"/><line x1="1208.5" y1="447" x2="1208.5" y2="615" stroke="rgba(204,204,220,0.21)" stroke-width="1"/><line x1="733" y1="531.0" x2="1243.3" y2="531.0" stroke="#dcbf48" stroke-width="1.15"/><path fill="none" stroke="#eab839" stroke-width="1.6" stroke-opacity="0.8" stroke-linecap="round" stroke-dasharray="0 4.27" d="M734.73 531.0 L1242.50 531.0"/></svg>
<div class="panel" style="left:1279px;top:396px;width:626px;height:258px;"></div>
<svg width="2549" height="1194" style="left:0;top:0" viewBox="0 0 2549 1194"><text x="1288.30" y="418.20" font-size="14" fill="#ccccdc" stroke="#ccccdc" stroke-width="0.4" textLength="346.00" lengthAdjust="spacingAndGlyphs">msteams: Интенсивность отправки уведомлений</text><circle cx="1658.70" cy="413.00" r="6.1" fill="none" stroke="#a4a4b4" stroke-width="1.25"/><rect x="1658.00" y="413.00" width="1.4" height="3.0" fill="#9d9dae"/><rect x="1658.00" y="410.10" width="1.4" height="1.3" fill="#9d9dae"/><line x1="1367" y1="447.5" x2="1879" y2="447.5" stroke="rgba(204,204,220,0.21)" stroke-width="1"/><line x1="1367" y1="489.5" x2="1879" y2="489.5" stroke="rgba(204,204,220,0.21)" stroke-width="1"/><line x1="1367" y1="531.5" x2="1879" y2="531.5" stroke="rgba(204,204,220,0.21)" stroke-width="1"/><line x1="1367" y1="573.5" x2="1879" y2="573.5" stroke="rgba(204,204,220,0.21)" stroke-width="1"/><line x1="1367" y1="615.5" x2="1879" y2="615.5" stroke="rgba(204,204,220,0.21)" stroke-width="1"/><line x1="1415.5" y1="447" x2="1415.5" y2="615" stroke="rgba(204,204,220,0.21)" stroke-width="1"/><line x1="1500.5" y1="447" x2="1500.5" y2="615" stroke="rgba(204,204,220,0.21)" stroke-width="1"/><line x1="1586.5" y1="447" x2="1586.5" y2="615" stroke="rgba(204,204,220,0.21)" stroke-width="1"/><line x1="1671.5" y1="447" x2="1671.5" y2="615" stroke="rgba(204,204,220,0.21)" stroke-width="1"/><line x1="1756.5" y1="447" x2="1756.5" y2="615" stroke="rgba(204,204,220,0.21)" stroke-width="1"/><line x1="1842.5" y1="447" x2="1842.5" y2="615" stroke="rgba(204,204,220,0.21)" stroke-width="1"/><line x1="1367" y1="531.0" x2="1877.3" y2="531.0" stroke="#dcbf48" stroke-width="1.15"/><path fill="none" stroke="#eab839" stroke-width="1.6" stroke-opacity="0.8" stroke-linecap="round" stroke-dasharray="0 4.27" d="M1368.73 531.0 L1876.50 531.0"/></svg>
<div class="panel" style="left:1913px;top:396px;width:626px;height:258px;"></div>
<svg width="2549" height="1194" style="left:0;top:0" viewBox="0 0 2549 1194"><text x="1922.30" y="418.20" font-size="14" fill="#ccccdc" stroke="#ccccdc" stroke-width="0.4" textLength="346.70" lengthAdjust="spacingAndGlyphs">opsgenie: Интенсивность отправки уведомлений</text><circle cx="2292.70" cy="413.00" r="6.1" fill="none" stroke="#a4a4b4" stroke-width="1.25"/><rect x="2292.00" y="413.00" width="1.4" height="3.0" fill="#9d9dae"/><rect x="2292.00" y="410.10" width="1.4" height="1.3" fill="#9d9dae"/><line x1="2001" y1="447.5" x2="2513" y2="447.5" stroke="rgba(204,204,220,0.21)" stroke-width="1"/><line x1="2001" y1="489.5" x2="2513" y2="489.5" stroke="rgba(204,204,220,0.21)" stroke-width="1"/><line x1="2001" y1="531.5" x2="2513" y2="531.5" stroke="rgba(204,204,220,0.21)" stroke-width="1"/><line x1="2001" y1="573.5" x2="2513" y2="573.5" stroke="rgba(204,204,220,0.21)" stroke-width="1"/><line x1="2001" y1="615.5" x2="2513" y2="615.5" stroke="rgba(204,204,220,0.21)" stroke-width="1"/><line x1="2049.5" y1="447" x2="2049.5" y2="615" stroke="rgba(204,204,220,0.21)" stroke-width="1"/><line x1="2134.5" y1="447" x2="2134.5" y2="615" stroke="rgba(204,204,220,0.21)" stroke-width="1"/><line x1="2220.5" y1="447" x2="2220.5" y2="615" stroke="rgba(204,204,220,0.21)" stroke-width="1"/><line x1="2305.5" y1="447" x2="2305.5" y2="615" stroke="rgba(204,204,220,0.21)" stroke-width="1"/><line x1="2390.5" y1="447" x2="2390.5" y2="615" stroke="rgba(204,204,220,0.21)" stroke-width="1"/><line x1="2475.5" y1="447" x2="2475.5" y2="615" stroke="rgba(204,204,220,0.21)" stroke-width="1"/><line x1="2001" y1="531.0" x2="2511.3" y2="531.0" stroke="#dcbf48" stroke-width="1.15"/><path fill="none" stroke="#eab839" stroke-width="1.6" stroke-opacity="0.8" stroke-linecap="round" stroke-dasharray="0 4.27" d="M2002.73 531.0 L2510.50 531.0"/></svg>
<div class="panel" style="left:11px;top:662px;width:626px;height:258px;"></div>
<svg width="2549" height="1194" style="left:0;top:0" viewBox="0 0 2549 1194"><text x="20.30" y="684.20" font-size="14" fill="#ccccdc" stroke="#ccccdc" stroke-width="0.4" textLength="353.90" lengthAdjust="spacingAndGlyphs">pagerduty: Интенсивность отправки уведомлений</text><circle cx="398.80" cy="679.00" r="6.1" fill="none" stroke="#a4a4b4" stroke-width="1.25"/><rect x="398.10" y="679.00" width="1.4" height="3.0" fill="#9d9dae"/><rect x="398.10" y="676.10" width="1.4" height="1.3" fill="#9d9dae"/><line x1="99" y1="713.5" x2="611" y2="713.5" stroke="rgba(204,204,220,0.21)" stroke-width="1"/><line x1="99" y1="755.5" x2="611" y2="755.5" stroke="rgba(204,204,220,0.21)" stroke-width="1"/><line x1="99" y1="797.5" x2="611" y2="797.5" stroke="rgba(204,204,220,0.21)" stroke-width="1"/><line x1="99" y1="839.5" x2="611" y2="839.5" stroke="rgba(204,204,220,0.21)" stroke-width="1"/><line x1="99" y1="881.5" x2="611" y2="881.5" stroke="rgba(204,204,220,0.21)" stroke-width="1"/><line x1="147.5" y1="713" x2="147.5" y2="881" stroke="rgba(204,204,220,0.21)" stroke-width="1"/><line x1="233.5" y1="713" x2="233.5" y2="881" stroke="rgba(204,204,220,0.21)" stroke-width="1"/><line x1="318.5" y1="713" x2="318.5" y2="881" stroke="rgba(204,204,220,0.21)" stroke-width="1"/><line x1="403.5" y1="713" x2="403.5" y2="881" stroke="rgba(204,204,220,0.21)" stroke-width="1"/><line x1="489.5" y1="713" x2="489.5" y2="881" stroke="rgba(204,204,220,0.21)" stroke-width="1"/><line x1="574.5" y1="713" x2="574.5" y2="881" stroke="rgba(204,204,220,0.21)" stroke-width="1"/><line x1="99" y1="797.0" x2="609.3" y2="797.0" stroke="#dcbf48" stroke-width="1.15"/><path fill="none" stroke="#eab839" stroke-width="1.6" stroke-opacity="0.8" stroke-linecap="round" stroke-dasharray="0 4.27" d="M100.73 797.0 L608.50 797.0"/></svg>
<div class="panel" style="left:645px;top:662px;width:626px;height:258px;"></div>
<svg width="2549" height="1194" style="left:0;top:0" viewBox="0 0 2549 1194"><text x="654.30" y="684.20" font-size="14" fill="#ccccdc" stroke="#ccccdc" stroke-width="0.4" textLength="347.10" lengthAdjust="spacingAndGlyphs">pushover: Интенсивность отправки уведомлений</text><circle cx="1025.80" cy="679.00" r="6.1" fill="none" stroke="#a4a4b4" stroke-width="1.25"/><rect x="1025.10" y="679.00" width="1.4" height="3.0" fill="#9d9dae"/><rect x="1025.10" y="676.10" width="1.4" height="1.3" fill="#9d9dae"/><line x1="733" y1="713.5" x2="1245" y2="713.5" stroke="rgba(204,204,220,0.21)" stroke-width="1"/><line x1="733" y1="755.5" x2="1245" y2="755.5" stroke="rgba(204,204,220,0.21)" stroke-width="1"/><line x1="733" y1="797.5" x2="1245" y2="797.5" stroke="rgba(204,204,220,0.21)" stroke-width="1"/><line x1="733" y1="839.5" x2="1245" y2="839.5" stroke="rgba(204,204,220,0.21)" stroke-width="1"/><line x1="733" y1="881.5" x2="1245" y2="881.5" stroke="rgba(204,204,220,0.21)" stroke-width="1"/><line x1="781.5" y1="713" x2="781.5" y2="881" stroke="rgba(204,204,220,0.21)" stroke-width="1"/><line x1="866.5" y1="713" x2="866.5" y2="881" stroke="rgba(204,204,220,0.21)" stroke-width="1"/><line x1="952.5" y1="713" x2="952.5" y2="881" stroke="rgba(204,204,220,0.21)" stroke-width="1"/><line x1="1037.5" y1="713" x2="1037.5" y2="881" stroke="rgba(204,204,220,0.21)" stroke-width="1"/><line x1="1122.5" y1="713" x2="1122.5" y2="881" stroke="rgba(204,204,220,0.21)" stroke-width="1"/><line x1="1208.5" y1="713" x2="1208.5" y2="881" stroke="rgba(204,204,220,0.21)" stroke-width="1"/><line x1="733" y1="797.0" x2="1243.3" y2="797.0" stroke="#dcbf48" stroke-width="1.15"/><path fill="none" stroke="#eab839" stroke-width="1.6" stroke-opacity="0.8" stroke-linecap="round" stroke-dasharray="0 4.27" d="M734.73 797.0 L1242.50 797.0"/></svg>
<div class="panel" style="left:1279px;top:662px;width:626px;height:258px;"></div>
<svg width="2549" height="1194" style="left:0;top:0" viewBox="0 0 2549 1194"><text x="1288.30" y="684.20" font-size="14" fill="#ccccdc" stroke="#ccccdc" stroke-width="0.4" textLength="319.40" lengthAdjust="spacingAndGlyphs">slack: Интенсивность отправки уведомлений</text><circle cx="1632.00" cy="679.00" r="6.1" fill="none" stroke="#a4a4b4" stroke-width="1.25"/><rect x="1631.30" y="679.00" width="1.4" height="3.0" fill="#9d9dae"/><rect x="1631.30" y="676.10" width="1.4" height="1.3" fill="#9d9dae"/><line x1="1367" y1="713.5" x2="1879" y2="713.5" stroke="rgba(204,204,220,0.21)" stroke-width="1"/><line x1="1367" y1="755.5" x2="1879" y2="755.5" stroke="rgba(204,204,220,0.21)" stroke-width="1"/><line x1="1367" y1="797.5" x2="1879" y2="797.5" stroke="rgba(204,204,220,0.21)" stroke-width="1"/><line x1="1367" y1="839.5" x2="1879" y2="839.5" stroke="rgba(204,204,220,0.21)" stroke-width="1"/><line x1="1367" y1="881.5" x2="1879" y2="881.5" stroke="rgba(204,204,220,0.21)" stroke-width="1"/><line x1="1415.5" y1="713" x2="1415.5" y2="881" stroke="rgba(204,204,220,0.21)" stroke-width="1"/><line x1="1500.5" y1="713" x2="1500.5" y2="881" stroke="rgba(204,204,220,0.21)" stroke-width="1"/><line x1="1586.5" y1="713" x2="1586.5" y2="881" stroke="rgba(204,204,220,0.21)" stroke-width="1"/><line x1="1671.5" y1="713" x2="1671.5" y2="881" stroke="rgba(204,204,220,0.21)" stroke-width="1"/><line x1="1756.5" y1="713" x2="1756.5" y2="881" stroke="rgba(204,204,220,0.21)" stroke-width="1"/><line x1="1842.5" y1="713" x2="1842.5" y2="881" stroke="rgba(204,204,220,0.21)" stroke-width="1"/><line x1="1367" y1="797.0" x2="1877.3" y2="797.0" stroke="#dcbf48" stroke-width="1.15"/><path fill="none" stroke="#eab839" stroke-width="1.6" stroke-opacity="0.8" stroke-linecap="round" stroke-dasharray="0 4.27" d="M1368.73 797.0 L1876.50 797.0"/></svg>
<div class="panel" style="left:1913px;top:662px;width:626px;height:258px;"></div>
<svg width="2549" height="1194" style="left:0;top:0" viewBox="0 0 2549 1194"><text x="1922.30" y="684.20" font-size="14" fill="#ccccdc" stroke="#ccccdc" stroke-width="0.4" textLength="307.60" lengthAdjust="spacingAndGlyphs">sns: Интенсивность отправки уведомлений</text><circle cx="2253.70" cy="679.00" r="6.1" fill="none" stroke="#a4a4b4" stroke-width="1.25"/><rect x="2253.00" y="679.00" width="1.4" height="3.0" fill="#9d9dae"/><rect x="2253.00" y="676.10" width="1.4" height="1.3" fill="#9d9dae"/><line x1="2001" y1="713.5" x2="2513" y2="713.5" stroke="rgba(204,204,220,0.21)" stroke-width="1"/><line x1="2001" y1="755.5" x2="2513" y2="755.5" stroke="rgba(204,204,220,0.21)" stroke-width="1"/><line x1="2001" y1="797.5" x2="2513" y2="797.5" stroke="rgba(204,204,220,0.21)" stroke-width="1"/><line x1="2001" y1="839.5" x2="2513" y2="839.5" stroke="rgba(204,204,220,0.21)" stroke-width="1"/><line x1="2001" y1="881.5" x2="2513" y2="881.5" stroke="rgba(204,204,220,0.21)" stroke-width="1"/><line x1="2049.5" y1="713" x2="2049.5" y2="881" stroke="rgba(204,204,220,0.21)" stroke-width="1"/><line x1="2134.5" y1="713" x2="2134.5" y2="881" stroke="rgba(204,204,220,0.21)" stroke-width="1"/><line x1="2220.5" y1="713" x2="2220.5" y2="881" stroke="rgba(204,204,220,0.21)" stroke-width="1"/><line x1="2305.5" y1="713" x2="2305.5" y2="881" stroke="rgba(204,204,220,0.21)" stroke-width="1"/><line x1="2390.5" y1="713" x2="2390.5" y2="881" stroke="rgba(204,204,220,0.21)" stroke-width="1"/><line x1="2475.5" y1="713" x2="2475.5" y2="881" stroke="rgba(204,204,220,0.21)" stroke-width="1"/><line x1="2001" y1="797.0" x2="2511.3" y2="797.0" stroke="#dcbf48" stroke-width="1.15"/><path fill="none" stroke="#eab839" stroke-width="1.6" stroke-opacity="0.8" stroke-linecap="round" stroke-dasharray="0 4.27" d="M2002.73 797.0 L2510.50 797.0"/></svg>
<div class="panel" style="left:11px;top:928px;width:626px;height:258px;"></div>
<svg width="2549" height="1194" style="left:0;top:0" viewBox="0 0 2549 1194"><text x="20.30" y="950.20" font-size="14" fill="#ccccdc" stroke="#ccccdc" stroke-width="0.4" textLength="344.50" lengthAdjust="spacingAndGlyphs">telegram: Интенсивность отправки уведомлений</text><circle cx="389.10" cy="945.00" r="6.1" fill="none" stroke="#a4a4b4" stroke-width="1.25"/><rect x="388.40" y="945.00" width="1.4" height="3.0" fill="#9d9dae"/><rect x="388.40" y="942.10" width="1.4" height="1.3" fill="#9d9dae"/><line x1="99" y1="979.5" x2="611" y2="979.5" stroke="rgba(204,204,220,0.21)" stroke-width="1"/><line x1="99" y1="1021.5" x2="611" y2="1021.5" stroke="rgba(204,204,220,0.21)" stroke-width="1"/><line x1="99" y1="1063.5" x2="611" y2="1063.5" stroke="rgba(204,204,220,0.21)" stroke-width="1"/><line x1="99" y1="1105.5" x2="611" y2="1105.5" stroke="rgba(204,204,220,0.21)" stroke-width="1"/><line x1="99" y1="1147.5" x2="611" y2="1147.5" stroke="rgba(204,204,220,0.21)" stroke-width="1"/><line x1="147.5" y1="979" x2="147.5" y2="1147" stroke="rgba(204,204,220,0.21)" stroke-width="1"/><line x1="233.5" y1="979" x2="233.5" y2="1147" stroke="rgba(204,204,220,0.21)" stroke-width="1"/><line x1="318.5" y1="979" x2="318.5" y2="1147" stroke="rgba(204,204,220,0.21)" stroke-width="1"/><line x1="403.5" y1="979" x2="403.5" y2="1147" stroke="rgba(204,204,220,0.21)" stroke-width="1"/><line x1="489.5" y1="979" x2="489.5" y2="1147" stroke="rgba(204,204,220,0.21)" stroke-width="1"/><line x1="574.5" y1="979" x2="574.5" y2="1147" stroke="rgba(204,204,220,0.21)" stroke-width="1"/><line x1="99" y1="1063.0" x2="609.3" y2="1063.0" stroke="#dcbf48" stroke-width="1.15"/><path fill="none" stroke="#eab839" stroke-width="1.6" stroke-opacity="0.8" stroke-linecap="round" stroke-dasharray="0 4.27" d="M100.73 1063.0 L608.50 1063.0"/></svg>
<div class="panel" style="left:645px;top:928px;width:626px;height:258px;"></div>
<svg width="2549" height="1194" style="left:0;top:0" viewBox="0 0 2549 1194"><text x="654.30" y="950.20" font-size="14" fill="#ccccdc" stroke="#ccccdc" stroke-width="0.4" textLength="347.90" lengthAdjust="spacingAndGlyphs">victorops: Интенсивность отправки уведомлений</text><circle cx="1027.00" cy="945.00" r="6.1" fill="none" stroke="#a4a4b4" stroke-width="1.25"/><rect x="1026.30" y="945.00" width="1.4" height="3.0" fill="#9d9dae"/><rect x="1026.30" y="942.10" width="1.4" height="1.3" fill="#9d9dae"/><line x1="733" y1="979.5" x2="1245" y2="979.5" stroke="rgba(204,204,220,0.21)" stroke-width="1"/><line x1="733" y1="1021.5" x2="1245" y2="1021.5" stroke="rgba(204,204,220,0.21)" stroke-width="1"/><line x1="733" y1="1063.5" x2="1245" y2="1063.5" stroke="rgba(204,204,220,0.21)" stroke-width="1"/><line x1="733" y1="1105.5" x2="1245" y2="1105.5" stroke="rgba(204,204,220,0.21)" stroke-width="1"/><line x1="733" y1="1147.5" x2="1245" y2="1147.5" stroke="rgba(204,204,220,0.21)" stroke-width="1"/><line x1="781.5" y1="979" x2="781.5" y2="1147" stroke="rgba(204,204,220,0.21)" stroke-width="1"/><line x1="866.5" y1="979" x2="866.5" y2="1147" stroke="rgba(204,204,220,0.21)" stroke-width="1"/><line x1="952.5" y1="979" x2="952.5" y2="1147" stroke="rgba(204,204,220,0.21)" stroke-width="1"/><line x1="1037.5" y1="979" x2="1037.5" y2="1147" stroke="rgba(204,204,220,0.21)" stroke-width="1"/><line x1="1122.5" y1="979" x2="1122.5" y2="1147" stroke="rgba(204,204,220,0.21)" stroke-width="1"/><line x1="1208.5" y1="979" x2="1208.5" y2="1147" stroke="rgba(204,204,220,0.21)" stroke-width="1"/><line x1="733" y1="1063.0" x2="1243.3" y2="1063.0" stroke="#dcbf48" stroke-width="1.15"/><path fill="none" stroke="#eab839" stroke-width="1.6" stroke-opacity="0.8" stroke-linecap="round" stroke-dasharray="0 4.27" d="M734.73 1063.0 L1242.50 1063.0"/></svg>
<div class="panel" style="left:1279px;top:928px;width:626px;height:258px;"></div>
<svg width="2549" height="1194" style="left:0;top:0" viewBox="0 0 2549 1194"><text x="1288.30" y="950.20" font-size="14" fill="#ccccdc" stroke="#ccccdc" stroke-width="0.4" textLength="328.80" lengthAdjust="spacingAndGlyphs">webex: Интенсивность отправки уведомлений</text><circle cx="1640.90" cy="945.00" r="6.1" fill="none" stroke="#a4a4b4" stroke-width="1.25"/><rect x="1640.20" y="945.00" width="1.4" height="3.0" fill="#9d9dae"/><rect x="1640.20" y="942.10" width="1.4" height="1.3" fill="#9d9dae"/><line x1="1367" y1="979.5" x2="1879" y2="979.5" stroke="rgba(204,204,220,0.21)" stroke-width="1"/><line x1="1367" y1="1021.5" x2="1879" y2="1021.5" stroke="rgba(204,204,220,0.21)" stroke-width="1"/><line x1="1367" y1="1063.5" x2="1879" y2="1063.5" stroke="rgba(204,204,220,0.21)" stroke-width="1"/><line x1="1367" y1="1105.5" x2="1879" y2="1105.5" stroke="rgba(204,204,220,0.21)" stroke-width="1"/><line x1="1367" y1="1147.5" x2="1879" y2="1147.5" stroke="rgba(204,204,220,0.21)" stroke-width="1"/><line x1="1415.5" y1="979" x2="1415.5" y2="1147" stroke="rgba(204,204,220,0.21)" stroke-width="1"/><line x1="1500.5" y1="979" x2="1500.5" y2="1147" stroke="rgba(204,204,220,0.21)" stroke-width="1"/><line x1="1586.5" y1="979" x2="1586.5" y2="1147" stroke="rgba(204,204,220,0.21)" stroke-width="1"/><line x1="1671.5" y1="979" x2="1671.5" y2="1147" stroke="rgba(204,204,220,0.21)" stroke-width="1"/><line x1="1756.5" y1="979" x2="1756.5" y2="1147" stroke="rgba(204,204,220,0.21)" stroke-width="1"/><line x1="1842.5" y1="979" x2="1842.5" y2="1147" stroke="rgba(204,204,220,0.21)" stroke-width="1"/><line x1="1367" y1="1063.0" x2="1877.3" y2="1063.0" stroke="#dcbf48" stroke-width="1.15"/><path fill="none" stroke="#eab839" stroke-width="1.6" stroke-opacity="0.8" stroke-linecap="round" stroke-dasharray="0 4.27" d="M1368.73 1063.0 L1876.50 1063.0"/></svg>
<div class="panel" style="left:1913px;top:928px;width:626px;height:258px;"></div>
<svg width="2549" height="1194" style="left:0;top:0" viewBox="0 0 2549 1194"><text x="1922.30" y="950.20" font-size="14" fill="#ccccdc" stroke="#ccccdc" stroke-width="0.4" textLength="346.00" lengthAdjust="spacingAndGlyphs">webhook: Интенсивность отправки уведомлений</text><circle cx="2292.70" cy="945.00" r="6.1" fill="none" stroke="#a4a4b4" stroke-width="1.25"/><rect x="2292.00" y="945.00" width="1.4" height="3.0" fill="#9d9dae"/><rect x="2292.00" y="942.10" width="1.4" height="1.3" fill="#9d9dae"/><line x1="2001" y1="979.5" x2="2513" y2="979.5" stroke="rgba(204,204,220,0.21)" stroke-width="1"/><line x1="2001" y1="1021.5" x2="2513" y2="1021.5" stroke="rgba(204,204,220,0.21)" stroke-width="1"/><line x1="2001" y1="1063.5" x2="2513" y2="1063.5" stroke="rgba(204,204,220,0.21)" stroke-width="1"/><line x1="2001" y1="1105.5" x2="2513" y2="1105.5" stroke="rgba(204,204,220,0.21)" stroke-width="1"/><line x1="2001" y1="1147.5" x2="2513" y2="1147.5" stroke="rgba(204,204,220,0.21)" stroke-width="1"/><line x1="2049.5" y1="979" x2="2049.5" y2="1147" stroke="rgba(204,204,220,0.21)" stroke-width="1"/><line x1="2134.5" y1="979" x2="2134.5" y2="1147" stroke="rgba(204,204,220,0.21)" stroke-width="1"/><line x1="2220.5" y1="979" x2="2220.5" y2="1147" stroke="rgba(204,204,220,0.21)" stroke-width="1"/><line x1="2305.5" y1="979" x2="2305.5" y2="1147" stroke="rgba(204,204,220,0.21)" stroke-width="1"/><line x1="2390.5" y1="979" x2="2390.5" y2="1147" stroke="rgba(204,204,220,0.21)" stroke-width="1"/><line x1="2475.5" y1="979" x2="2475.5" y2="1147" stroke="rgba(204,204,220,0.21)" stroke-width="1"/><line x1="2001" y1="1063.0" x2="2511.3" y2="1063.0" stroke="#dcbf48" stroke-width="1.15"/><path fill="none" stroke="#eab839" stroke-width="1.6" stroke-opacity="0.8" stroke-linecap="round" stroke-dasharray="0 4.27" d="M2002.73 1063.0 L2510.50 1063.0"/></svg>
<svg width="2549" height="1194" viewBox="0 0 2549 1194" style="will-change:transform"><text x="46.00" y="147.20" font-size="12" fill="#ccccdc" stroke="#ccccdc" stroke-width="0.2" text-anchor="end" textLength="24.40" lengthAdjust="spacingAndGlyphs">30.5</text><text x="46.00" y="175.20" font-size="12" fill="#ccccdc" stroke="#ccccdc" stroke-width="0.2" text-anchor="end" textLength="14.20" lengthAdjust="spacingAndGlyphs">30</text><text x="46.00" y="203.20" font-size="12" fill="#ccccdc" stroke="#ccccdc" stroke-width="0.2" text-anchor="end" textLength="24.40" lengthAdjust="spacingAndGlyphs">29.5</text><text x="46.00" y="231.20" font-size="12" fill="#ccccdc" stroke="#ccccdc" stroke-width="0.2" text-anchor="end" textLength="14.20" lengthAdjust="spacingAndGlyphs">29</text><text x="46.00" y="259.20" font-size="12" fill="#ccccdc" stroke="#ccccdc" stroke-width="0.2" text-anchor="end" textLength="24.40" lengthAdjust="spacingAndGlyphs">28.5</text><text x="46.00" y="287.20" font-size="12" fill="#ccccdc" stroke="#ccccdc" stroke-width="0.2" text-anchor="end" textLength="14.20" lengthAdjust="spacingAndGlyphs">28</text><text x="46.00" y="315.20" font-size="12" fill="#ccccdc" stroke="#ccccdc" stroke-width="0.2" text-anchor="end" textLength="23.40" lengthAdjust="spacingAndGlyphs">27.5</text><text x="66.10" y="329.60" font-size="12" fill="#ccccdc" stroke="#ccccdc" stroke-width="0.2" text-anchor="middle" textLength="31.00" lengthAdjust="spacingAndGlyphs">18:45</text><text x="165.50" y="329.60" font-size="12" fill="#ccccdc" stroke="#ccccdc" stroke-width="0.2" text-anchor="middle" textLength="31.00" lengthAdjust="spacingAndGlyphs">18:50</text><text x="264.90" y="329.60" font-size="12" fill="#ccccdc" stroke="#ccccdc" stroke-width="0.2" text-anchor="middle" textLength="31.00" lengthAdjust="spacingAndGlyphs">18:55</text><text x="364.30" y="329.60" font-size="12" fill="#ccccdc" stroke="#ccccdc" stroke-width="0.2" text-anchor="middle" textLength="31.00" lengthAdjust="spacingAndGlyphs">19:00</text><text x="463.70" y="329.60" font-size="12" fill="#ccccdc" stroke="#ccccdc" stroke-width="0.2" text-anchor="middle" textLength="31.00" lengthAdjust="spacingAndGlyphs">19:05</text><text x="563.10" y="329.60" font-size="12" fill="#ccccdc" stroke="#ccccdc" stroke-width="0.2" text-anchor="middle" textLength="31.00" lengthAdjust="spacingAndGlyphs">19:10</text><text x="662.50" y="329.60" font-size="12" fill="#ccccdc" stroke="#ccccdc" stroke-width="0.2" text-anchor="middle" textLength="31.00" lengthAdjust="spacingAndGlyphs">19:15</text><text x="761.90" y="329.60" font-size="12" fill="#ccccdc" stroke="#ccccdc" stroke-width="0.2" text-anchor="middle" textLength="31.00" lengthAdjust="spacingAndGlyphs">19:20</text><text x="861.30" y="329.60" font-size="12" fill="#ccccdc" stroke="#ccccdc" stroke-width="0.2" text-anchor="middle" textLength="31.00" lengthAdjust="spacingAndGlyphs">19:25</text><text x="960.70" y="329.60" font-size="12" fill="#ccccdc" stroke="#ccccdc" stroke-width="0.2" text-anchor="middle" textLength="31.00" lengthAdjust="spacingAndGlyphs">19:30</text><text x="1060.10" y="329.60" font-size="12" fill="#ccccdc" stroke="#ccccdc" stroke-width="0.2" text-anchor="middle" textLength="31.00" lengthAdjust="spacingAndGlyphs">19:35</text><text x="1159.50" y="329.60" font-size="12" fill="#ccccdc" stroke="#ccccdc" stroke-width="0.2" text-anchor="middle" textLength="31.00" lengthAdjust="spacingAndGlyphs">19:40</text><text x="1356.00" y="147.20" font-size="12" fill="#ccccdc" stroke="#ccccdc" stroke-width="0.2" text-anchor="end" textLength="57.00" lengthAdjust="spacingAndGlyphs">1.25 ops/s</text><text x="1356.00" y="180.80" font-size="12" fill="#ccccdc" stroke="#ccccdc" stroke-width="0.2" text-anchor="end" textLength="40.80" lengthAdjust="spacingAndGlyphs">1 ops/s</text><text x="1356.00" y="214.40" font-size="12" fill="#ccccdc" stroke="#ccccdc" stroke-width="0.2" text-anchor="end" textLength="66.50" lengthAdjust="spacingAndGlyphs">0.750 ops/s</text><text x="1356.00" y="248.00" font-size="12" fill="#ccccdc" stroke="#ccccdc" stroke-width="0.2" text-anchor="end" textLength="66.90" lengthAdjust="spacingAndGlyphs">0.500 ops/s</text><text x="1356.00" y="281.60" font-size="12" fill="#ccccdc" stroke="#ccccdc" stroke-width="0.2" text-anchor="end" textLength="66.90" lengthAdjust="spacingAndGlyphs">0.250 ops/s</text><text x="1356.00" y="315.20" font-size="12" fill="#ccccdc" stroke="#ccccdc" stroke-width="0.2" text-anchor="end" textLength="41.30" lengthAdjust="spacingAndGlyphs">0 ops/s</text><text x="1375.45" y="329.60" font-size="12" fill="#ccccdc" stroke="#ccccdc" stroke-width="0.2" text-anchor="middle" textLength="31.00" lengthAdjust="spacingAndGlyphs">18:45</text><text x="1471.36" y="329.60" font-size="12" fill="#ccccdc" stroke="#ccccdc" stroke-width="0.2" text-anchor="middle" textLength="31.00" lengthAdjust="spacingAndGlyphs">18:50</text><text x="1567.27" y="329.60" font-size="12" fill="#ccccdc" stroke="#ccccdc" stroke-width="0.2" text-anchor="middle" textLength="31.00" lengthAdjust="spacingAndGlyphs">18:55</text><text x="1663.18" y="329.60" font-size="12" fill="#ccccdc" stroke="#ccccdc" stroke-width="0.2" text-anchor="middle" textLength="31.00" lengthAdjust="spacingAndGlyphs">19:00</text><text x="1759.09" y="329.60" font-size="12" fill="#ccccdc" stroke="#ccccdc" stroke-width="0.2" text-anchor="middle" textLength="31.00" lengthAdjust="spacingAndGlyphs">19:05</text><text x="1855.00" y="329.60" font-size="12" fill="#ccccdc" stroke="#ccccdc" stroke-width="0.2" text-anchor="middle" textLength="31.00" lengthAdjust="spacingAndGlyphs">19:10</text><text x="1950.91" y="329.60" font-size="12" fill="#ccccdc" stroke="#ccccdc" stroke-width="0.2" text-anchor="middle" textLength="31.00" lengthAdjust="spacingAndGlyphs">19:15</text><text x="2046.82" y="329.60" font-size="12" fill="#ccccdc" stroke="#ccccdc" stroke-width="0.2" text-anchor="middle" textLength="31.00" lengthAdjust="spacingAndGlyphs">19:20</text><text x="2142.73" y="329.60" font-size="12" fill="#ccccdc" stroke="#ccccdc" stroke-width="0.2" text-anchor="middle" textLength="31.00" lengthAdjust="spacingAndGlyphs">19:25</text><text x="2238.64" y="329.60" font-size="12" fill="#ccccdc" stroke="#ccccdc" stroke-width="0.2" text-anchor="middle" textLength="31.00" lengthAdjust="spacingAndGlyphs">19:30</text><text x="2334.55" y="329.60" font-size="12" fill="#ccccdc" stroke="#ccccdc" stroke-width="0.2" text-anchor="middle" textLength="31.00" lengthAdjust="spacingAndGlyphs">19:35</text><text x="2430.46" y="329.60" font-size="12" fill="#ccccdc" stroke="#ccccdc" stroke-width="0.2" text-anchor="middle" textLength="31.00" lengthAdjust="spacingAndGlyphs">19:40</text><text x="93.20" y="451.20" font-size="12" fill="#ccccdc" stroke="#ccccdc" stroke-width="0.2" text-anchor="end" textLength="40.80" lengthAdjust="spacingAndGlyphs">1 ops/s</text><text x="93.20" y="493.20" font-size="12" fill="#ccccdc" stroke="#ccccdc" stroke-width="0.2" text-anchor="end" textLength="66.90" lengthAdjust="spacingAndGlyphs">0.500 ops/s</text><text x="93.20" y="535.20" font-size="12" fill="#ccccdc" stroke="#ccccdc" stroke-width="0.2" text-anchor="end" textLength="41.30" lengthAdjust="spacingAndGlyphs">0 ops/s</text><text x="93.20" y="577.20" font-size="12" fill="#ccccdc" stroke="#ccccdc" stroke-width="0.2" text-anchor="end" textLength="72.80" lengthAdjust="spacingAndGlyphs">-0.500 ops/s</text><text x="93.20" y="619.20" font-size="12" fill="#ccccdc" stroke="#ccccdc" stroke-width="0.2" text-anchor="end" textLength="45.00" lengthAdjust="spacingAndGlyphs">-1 ops/s</text><text x="147.70" y="633.60" font-size="12" fill="#ccccdc" stroke="#ccccdc" stroke-width="0.2" text-anchor="middle" textLength="31.00" lengthAdjust="spacingAndGlyphs">18:50</text><text x="233.10" y="633.60" font-size="12" fill="#ccccdc" stroke="#ccccdc" stroke-width="0.2" text-anchor="middle" textLength="31.00" lengthAdjust="spacingAndGlyphs">19:00</text><text x="318.50" y="633.60" font-size="12" fill="#ccccdc" stroke="#ccccdc" stroke-width="0.2" text-anchor="middle" textLength="31.00" lengthAdjust="spacingAndGlyphs">19:10</text><text x="403.90" y="633.60" font-size="12" fill="#ccccdc" stroke="#ccccdc" stroke-width="0.2" text-anchor="middle" textLength="31.00" lengthAdjust="spacingAndGlyphs">19:20</text><text x="489.30" y="633.60" font-size="12" fill="#ccccdc" stroke="#ccccdc" stroke-width="0.2" text-anchor="middle" textLength="31.00" lengthAdjust="spacingAndGlyphs">19:30</text><text x="574.70" y="633.60" font-size="12" fill="#ccccdc" stroke="#ccccdc" stroke-width="0.2" text-anchor="middle" textLength="31.00" lengthAdjust="spacingAndGlyphs">19:40</text><text x="727.20" y="451.20" font-size="12" fill="#ccccdc" stroke="#ccccdc" stroke-width="0.2" text-anchor="end" textLength="40.80" lengthAdjust="spacingAndGlyphs">1 ops/s</text><text x="727.20" y="493.20" font-size="12" fill="#ccccdc" stroke="#ccccdc" stroke-width="0.2" text-anchor="end" textLength="66.90" lengthAdjust="spacingAndGlyphs">0.500 ops/s</text><text x="727.20" y="535.20" font-size="12" fill="#ccccdc" stroke="#ccccdc" stroke-width="0.2" text-anchor="end" textLength="41.30" lengthAdjust="spacingAndGlyphs">0 ops/s</text><text x="727.20" y="577.20" font-size="12" fill="#ccccdc" stroke="#ccccdc" stroke-width="0.2" text-anchor="end" textLength="72.80" lengthAdjust="spacingAndGlyphs">-0.500 ops/s</text><text x="727.20" y="619.20" font-size="12" fill="#ccccdc" stroke="#ccccdc" stroke-width="0.2" text-anchor="end" textLength="45.00" lengthAdjust="spacingAndGlyphs">-1 ops/s</text><text x="781.70" y="633.60" font-size="12" fill="#ccccdc" stroke="#ccccdc" stroke-width="0.2" text-anchor="middle" textLength="31.00" lengthAdjust="spacingAndGlyphs">18:50</text><text x="867.10" y="633.60" font-size="12" fill="#ccccdc" stroke="#ccccdc" stroke-width="0.2" text-anchor="middle" textLength="31.00" lengthAdjust="spacingAndGlyphs">19:00</text><text x="952.50" y="633.60" font-size="12" fill="#ccccdc" stroke="#ccccdc" stroke-width="0.2" text-anchor="middle" textLength="31.00" lengthAdjust="spacingAndGlyphs">19:10</text><text x="1037.90" y="633.60" font-size="12" fill="#ccccdc" stroke="#ccccdc" stroke-width="0.2" text-anchor="middle" textLength="31.00" lengthAdjust="spacingAndGlyphs">19:20</text><text x="1123.30" y="633.60" font-size="12" fill="#ccccdc" stroke="#ccccdc" stroke-width="0.2" text-anchor="middle" textLength="31.00" lengthAdjust="spacingAndGlyphs">19:30</text><text x="1208.70" y="633.60" font-size="12" fill="#ccccdc" stroke="#ccccdc" stroke-width="0.2" text-anchor="middle" textLength="31.00" lengthAdjust="spacingAndGlyphs">19:40</text><text x="1361.20" y="451.20" font-size="12" fill="#ccccdc" stroke="#ccccdc" stroke-width="0.2" text-anchor="end" textLength="40.80" lengthAdjust="spacingAndGlyphs">1 ops/s</text><text x="1361.20" y="493.20" font-size="12" fill="#ccccdc" stroke="#ccccdc" stroke-width="0.2" text-anchor="end" textLength="66.90" lengthAdjust="spacingAndGlyphs">0.500 ops/s</text><text x="1361.20" y="535.20" font-size="12" fill="#ccccdc" stroke="#ccccdc" stroke-width="0.2" text-anchor="end" textLength="41.30" lengthAdjust="spacingAndGlyphs">0 ops/s</text><text x="1361.20" y="577.20" font-size="12" fill="#ccccdc" stroke="#ccccdc" stroke-width="0.2" text-anchor="end" textLength="72.80" lengthAdjust="spacingAndGlyphs">-0.500 ops/s</text><text x="1361.20" y="619.20" font-size="12" fill="#ccccdc" stroke="#ccccdc" stroke-width="0.2" text-anchor="end" textLength="45.00" lengthAdjust="spacingAndGlyphs">-1 ops/s</text><text x="1415.70" y="633.60" font-size="12" fill="#ccccdc" stroke="#ccccdc" stroke-width="0.2" text-anchor="middle" textLength="31.00" lengthAdjust="spacingAndGlyphs">18:50</text><text x="1501.10" y="633.60" font-size="12" fill="#ccccdc" stroke="#ccccdc" stroke-width="0.2" text-anchor="middle" textLength="31.00" lengthAdjust="spacingAndGlyphs">19:00</text><text x="1586.50" y="633.60" font-size="12" fill="#ccccdc" stroke="#ccccdc" stroke-width="0.2" text-anchor="middle" textLength="31.00" lengthAdjust="spacingAndGlyphs">19:10</text><text x="1671.90" y="633.60" font-size="12" fill="#ccccdc" stroke="#ccccdc" stroke-width="0.2" text-anchor="middle" textLength="31.00" lengthAdjust="spacingAndGlyphs">19:20</text><text x="1757.30" y="633.60" font-size="12" fill="#ccccdc" stroke="#ccccdc" stroke-width="0.2" text-anchor="middle" textLength="31.00" lengthAdjust="spacingAndGlyphs">19:30</text><text x="1842.70" y="633.60" font-size="12" fill="#ccccdc" stroke="#ccccdc" stroke-width="0.2" text-anchor="middle" textLength="31.00" lengthAdjust="spacingAndGlyphs">19:40</text><text x="1995.20" y="451.20" font-size="12" fill="#ccccdc" stroke="#ccccdc" stroke-width="0.2" text-anchor="end" textLength="40.80" lengthAdjust="spacingAndGlyphs">1 ops/s</text><text x="1995.20" y="493.20" font-size="12" fill="#ccccdc" stroke="#ccccdc" stroke-width="0.2" text-anchor="end" textLength="66.90" lengthAdjust="spacingAndGlyphs">0.500 ops/s</text><text x="1995.20" y="535.20" font-size="12" fill="#ccccdc" stroke="#ccccdc" stroke-width="0.2" text-anchor="end" textLength="41.30" lengthAdjust="spacingAndGlyphs">0 ops/s</text><text x="1995.20" y="577.20" font-size="12" fill="#ccccdc" stroke="#ccccdc" stroke-width="0.2" text-anchor="end" textLength="72.80" lengthAdjust="spacingAndGlyphs">-0.500 ops/s</text><text x="1995.20" y="619.20" font-size="12" fill="#ccccdc" stroke="#ccccdc" stroke-width="0.2" text-anchor="end" textLength="45.00" lengthAdjust="spacingAndGlyphs">-1 ops/s</text><text x="2049.70" y="633.60" font-size="12" fill="#ccccdc" stroke="#ccccdc" stroke-width="0.2" text-anchor="middle" textLength="31.00" lengthAdjust="spacingAndGlyphs">18:50</text><text x="2135.10" y="633.60" font-size="12" fill="#ccccdc" stroke="#ccccdc" stroke-width="0.2" text-anchor="middle" textLength="31.00" lengthAdjust="spacingAndGlyphs">19:00</text><text x="2220.50" y="633.60" font-size="12" fill="#ccccdc" stroke="#ccccdc" stroke-width="0.2" text-anchor="middle" textLength="31.00" lengthAdjust="spacingAndGlyphs">19:10</text><text x="2305.90" y="633.60" font-size="12" fill="#ccccdc" stroke="#ccccdc" stroke-width="0.2" text-anchor="middle" textLength="31.00" lengthAdjust="spacingAndGlyphs">19:20</text><text x="2391.30" y="633.60" font-size="12" fill="#ccccdc" stroke="#ccccdc" stroke-width="0.2" text-anchor="middle" textLength="31.00" lengthAdjust="spacingAndGlyphs">19:30</text><text x="2476.70" y="633.60" font-size="12" fill="#ccccdc" stroke="#ccccdc" stroke-width="0.2" text-anchor="middle" textLength="31.00" lengthAdjust="spacingAndGlyphs">19:40</text><text x="93.20" y="717.20" font-size="12" fill="#ccccdc" stroke="#ccccdc" stroke-width="0.2" text-anchor="end" textLength="40.80" lengthAdjust="spacingAndGlyphs">1 ops/s</text><text x="93.20" y="759.20" font-size="12" fill="#ccccdc" stroke="#ccccdc" stroke-width="0.2" text-anchor="end" textLength="66.90" lengthAdjust="spacingAndGlyphs">0.500 ops/s</text><text x="93.20" y="801.20" font-size="12" fill="#ccccdc" stroke="#ccccdc" stroke-width="0.2" text-anchor="end" textLength="41.30" lengthAdjust="spacingAndGlyphs">0 ops/s</text><text x="93.20" y="843.20" font-size="12" fill="#ccccdc" stroke="#ccccdc" stroke-width="0.2" text-anchor="end" textLength="72.80" lengthAdjust="spacingAndGlyphs">-0.500 ops/s</text><text x="93.20" y="885.20" font-size="12" fill="#ccccdc" stroke="#ccccdc" stroke-width="0.2" text-anchor="end" textLength="45.00" lengthAdjust="spacingAndGlyphs">-1 ops/s</text><text x="147.70" y="899.60" font-size="12" fill="#ccccdc" stroke="#ccccdc" stroke-width="0.2" text-anchor="middle" textLength="31.00" lengthAdjust="spacingAndGlyphs">18:50</text><text x="233.10" y="899.60" font-size="12" fill="#ccccdc" stroke="#ccccdc" stroke-width="0.2" text-anchor="middle" textLength="31.00" lengthAdjust="spacingAndGlyphs">19:00</text><text x="318.50" y="899.60" font-size="12" fill="#ccccdc" stroke="#ccccdc" stroke-width="0.2" text-anchor="middle" textLength="31.00" lengthAdjust="spacingAndGlyphs">19:10</text><text x="403.90" y="899.60" font-size="12" fill="#ccccdc" stroke="#ccccdc" stroke-width="0.2" text-anchor="middle" textLength="31.00" lengthAdjust="spacingAndGlyphs">19:20</text><text x="489.30" y="899.60" font-size="12" fill="#ccccdc" stroke="#ccccdc" stroke-width="0.2" text-anchor="middle" textLength="31.00" lengthAdjust="spacingAndGlyphs">19:30</text><text x="574.70" y="899.60" font-size="12" fill="#ccccdc" stroke="#ccccdc" stroke-width="0.2" text-anchor="middle" textLength="31.00" lengthAdjust="spacingAndGlyphs">19:40</text><text x="727.20" y="717.20" font-size="12" fill="#ccccdc" stroke="#ccccdc" stroke-width="0.2" text-anchor="end" textLength="40.80" lengthAdjust="spacingAndGlyphs">1 ops/s</text><text x="727.20" y="759.20" font-size="12" fill="#ccccdc" stroke="#ccccdc" stroke-width="0.2" text-anchor="end" textLength="66.90" lengthAdjust="spacingAndGlyphs">0.500 ops/s</text><text x="727.20" y="801.20" font-size="12" fill="#ccccdc" stroke="#ccccdc" stroke-width="0.2" text-anchor="end" textLength="41.30" lengthAdjust="spacingAndGlyphs">0 ops/s</text><text x="727.20" y="843.20" font-size="12" fill="#ccccdc" stroke="#ccccdc" stroke-width="0.2" text-anchor="end" textLength="72.80" lengthAdjust="spacingAndGlyphs">-0.500 ops/s</text><text x="727.20" y="885.20" font-size="12" fill="#ccccdc" stroke="#ccccdc" stroke-width="0.2" text-anchor="end" textLength="45.00" lengthAdjust="spacingAndGlyphs">-1 ops/s</text><text x="781.70" y="899.60" font-size="12" fill="#ccccdc" stroke="#ccccdc" stroke-width="0.2" text-anchor="middle" textLength="31.00" lengthAdjust="spacingAndGlyphs">18:50</text><text x="867.10" y="899.60" font-size="12" fill="#ccccdc" stroke="#ccccdc" stroke-width="0.2" text-anchor="middle" textLength="31.00" lengthAdjust="spacingAndGlyphs">19:00</text><text x="952.50" y="899.60" font-size="12" fill="#ccccdc" stroke="#ccccdc" stroke-width="0.2" text-anchor="middle" textLength="31.00" lengthAdjust="spacingAndGlyphs">19:10</text><text x="1037.90" y="899.60" font-size="12" fill="#ccccdc" stroke="#ccccdc" stroke-width="0.2" text-anchor="middle" textLength="31.00" lengthAdjust="spacingAndGlyphs">19:20</text><text x="1123.30" y="899.60" font-size="12" fill="#ccccdc" stroke="#ccccdc" stroke-width="0.2" text-anchor="middle" textLength="31.00" lengthAdjust="spacingAndGlyphs">19:30</text><text x="1208.70" y="899.60" font-size="12" fill="#ccccdc" stroke="#ccccdc" stroke-width="0.2" text-anchor="middle" textLength="31.00" lengthAdjust="spacingAndGlyphs">19:40</text><text x="1361.20" y="717.20" font-size="12" fill="#ccccdc" stroke="#ccccdc" stroke-width="0.2" text-anchor="end" textLength="40.80" lengthAdjust="spacingAndGlyphs">1 ops/s</text><text x="1361.20" y="759.20" font-size="12" fill="#ccccdc" stroke="#ccccdc" stroke-width="0.2" text-anchor="end" textLength="66.90" lengthAdjust="spacingAndGlyphs">0.500 ops/s</text><text x="1361.20" y="801.20" font-size="12" fill="#ccccdc" stroke="#ccccdc" stroke-width="0.2" text-anchor="end" textLength="41.30" lengthAdjust="spacingAndGlyphs">0 ops/s</text><text x="1361.20" y="843.20" font-size="12" fill="#ccccdc" stroke="#ccccdc" stroke-width="0.2" text-anchor="end" textLength="72.80" lengthAdjust="spacingAndGlyphs">-0.500 ops/s</text><text x="1361.20" y="885.20" font-size="12" fill="#ccccdc" stroke="#ccccdc" stroke-width="0.2" text-anchor="end" textLength="45.00" lengthAdjust="spacingAndGlyphs">-1 ops/s</text><text x="1415.70" y="899.60" font-size="12" fill="#ccccdc" stroke="#ccccdc" stroke-width="0.2" text-anchor="middle" textLength="31.00" lengthAdjust="spacingAndGlyphs">18:50</text><text x="1501.10" y="899.60" font-size="12" fill="#ccccdc" stroke="#ccccdc" stroke-width="0.2" text-anchor="middle" textLength="31.00" lengthAdjust="spacingAndGlyphs">19:00</text><text x="1586.50" y="899.60" font-size="12" fill="#ccccdc" stroke="#ccccdc" stroke-width="0.2" text-anchor="middle" textLength="31.00" lengthAdjust="spacingAndGlyphs">19:10</text><text x="1671.90" y="899.60" font-size="12" fill="#ccccdc" stroke="#ccccdc" stroke-width="0.2" text-anchor="middle" textLength="31.00" lengthAdjust="spacingAndGlyphs">19:20</text><text x="1757.30" y="899.60" font-size="12" fill="#ccccdc" stroke="#ccccdc" stroke-width="0.2" text-anchor="middle" textLength="31.00" lengthAdjust="spacingAndGlyphs">19:30</text><text x="1842.70" y="899.60" font-size="12" fill="#ccccdc" stroke="#ccccdc" stroke-width="0.2" text-anchor="middle" textLength="31.00" lengthAdjust="spacingAndGlyphs">19:40</text><text x="1995.20" y="717.20" font-size="12" fill="#ccccdc" stroke="#ccccdc" stroke-width="0.2" text-anchor="end" textLength="40.80" lengthAdjust="spacingAndGlyphs">1 ops/s</text><text x="1995.20" y="759.20" font-size="12" fill="#ccccdc" stroke="#ccccdc" stroke-width="0.2" text-anchor="end" textLength="66.90" lengthAdjust="spacingAndGlyphs">0.500 ops/s</text><text x="1995.20" y="801.20" font-size="12" fill="#ccccdc" stroke="#ccccdc" stroke-width="0.2" text-anchor="end" textLength="41.30" lengthAdjust="spacingAndGlyphs">0 ops/s</text><text x="1995.20" y="843.20" font-size="12" fill="#ccccdc" stroke="#ccccdc" stroke-width="0.2" text-anchor="end" textLength="72.80" lengthAdjust="spacingAndGlyphs">-0.500 ops/s</text><text x="1995.20" y="885.20" font-size="12" fill="#ccccdc" stroke="#ccccdc" stroke-width="0.2" text-anchor="end" textLength="45.00" lengthAdjust="spacingAndGlyphs">-1 ops/s</text><text x="2049.70" y="899.60" font-size="12" fill="#ccccdc" stroke="#ccccdc" stroke-width="0.2" text-anchor="middle" textLength="31.00" lengthAdjust="spacingAndGlyphs">18:50</text><text x="2135.10" y="899.60" font-size="12" fill="#ccccdc" stroke="#ccccdc" stroke-width="0.2" text-anchor="middle" textLength="31.00" lengthAdjust="spacingAndGlyphs">19:00</text><text x="2220.50" y="899.60" font-size="12" fill="#ccccdc" stroke="#ccccdc" stroke-width="0.2" text-anchor="middle" textLength="31.00" lengthAdjust="spacingAndGlyphs">19:10</text><text x="2305.90" y="899.60" font-size="12" fill="#ccccdc" stroke="#ccccdc" stroke-width="0.2" text-anchor="middle" textLength="31.00" lengthAdjust="spacingAndGlyphs">19:20</text><text x="2391.30" y="899.60" font-size="12" fill="#ccccdc" stroke="#ccccdc" stroke-width="0.2" text-anchor="middle" textLength="31.00" lengthAdjust="spacingAndGlyphs">19:30</text><text x="2476.70" y="899.60" font-size="12" fill="#ccccdc" stroke="#ccccdc" stroke-width="0.2" text-anchor="middle" textLength="31.00" lengthAdjust="spacingAndGlyphs">19:40</text><text x="93.20" y="983.20" font-size="12" fill="#ccccdc" stroke="#ccccdc" stroke-width="0.2" text-anchor="end" textLength="40.80" lengthAdjust="spacingAndGlyphs">1 ops/s</text><text x="93.20" y="1025.20" font-size="12" fill="#ccccdc" stroke="#ccccdc" stroke-width="0.2" text-anchor="end" textLength="66.90" lengthAdjust="spacingAndGlyphs">0.500 ops/s</text><text x="93.20" y="1067.20" font-size="12" fill="#ccccdc" stroke="#ccccdc" stroke-width="0.2" text-anchor="end" textLength="41.30" lengthAdjust="spacingAndGlyphs">0 ops/s</text><text x="93.20" y="1109.20" font-size="12" fill="#ccccdc" stroke="#ccccdc" stroke-width="0.2" text-anchor="end" textLength="72.80" lengthAdjust="spacingAndGlyphs">-0.500 ops/s</text><text x="93.20" y="1151.20" font-size="12" fill="#ccccdc" stroke="#ccccdc" stroke-width="0.2" text-anchor="end" textLength="45.00" lengthAdjust="spacingAndGlyphs">-1 ops/s</text><text x="147.70" y="1165.60" font-size="12" fill="#ccccdc" stroke="#ccccdc" stroke-width="0.2" text-anchor="middle" textLength="31.00" lengthAdjust="spacingAndGlyphs">18:50</text><text x="233.10" y="1165.60" font-size="12" fill="#ccccdc" stroke="#ccccdc" stroke-width="0.2" text-anchor="middle" textLength="31.00" lengthAdjust="spacingAndGlyphs">19:00</text><text x="318.50" y="1165.60" font-size="12" fill="#ccccdc" stroke="#ccccdc" stroke-width="0.2" text-anchor="middle" textLength="31.00" lengthAdjust="spacingAndGlyphs">19:10</text><text x="403.90" y="1165.60" font-size="12" fill="#ccccdc" stroke="#ccccdc" stroke-width="0.2" text-anchor="middle" textLength="31.00" lengthAdjust="spacingAndGlyphs">19:20</text><text x="489.30" y="1165.60" font-size="12" fill="#ccccdc" stroke="#ccccdc" stroke-width="0.2" text-anchor="middle" textLength="31.00" lengthAdjust="spacingAndGlyphs">19:30</text><text x="574.70" y="1165.60" font-size="12" fill="#ccccdc" stroke="#ccccdc" stroke-width="0.2" text-anchor="middle" textLength="31.00" lengthAdjust="spacingAndGlyphs">19:40</text><text x="727.20" y="983.20" font-size="12" fill="#ccccdc" stroke="#ccccdc" stroke-width="0.2" text-anchor="end" textLength="40.80" lengthAdjust="spacingAndGlyphs">1 ops/s</text><text x="727.20" y="1025.20" font-size="12" fill="#ccccdc" stroke="#ccccdc" stroke-width="0.2" text-anchor="end" textLength="66.90" lengthAdjust="spacingAndGlyphs">0.500 ops/s</text><text x="727.20" y="1067.20" font-size="12" fill="#ccccdc" stroke="#ccccdc" stroke-width="0.2" text-anchor="end" textLength="41.30" lengthAdjust="spacingAndGlyphs">0 ops/s</text><text x="727.20" y="1109.20" font-size="12" fill="#ccccdc" stroke="#ccccdc" stroke-width="0.2" text-anchor="end" textLength="72.80" lengthAdjust="spacingAndGlyphs">-0.500 ops/s</text><text x="727.20" y="1151.20" font-size="12" fill="#ccccdc" stroke="#ccccdc" stroke-width="0.2" text-anchor="end" textLength="45.00" lengthAdjust="spacingAndGlyphs">-1 ops/s</text><text x="781.70" y="1165.60" font-size="12" fill="#ccccdc" stroke="#ccccdc" stroke-width="0.2" text-anchor="middle" textLength="31.00" lengthAdjust="spacingAndGlyphs">18:50</text><text x="867.10" y="1165.60" font-size="12" fill="#ccccdc" stroke="#ccccdc" stroke-width="0.2" text-anchor="middle" textLength="31.00" lengthAdjust="spacingAndGlyphs">19:00</text><text x="952.50" y="1165.60" font-size="12" fill="#ccccdc" stroke="#ccccdc" stroke-width="0.2" text-anchor="middle" textLength="31.00" lengthAdjust="spacingAndGlyphs">19:10</text><text x="1037.90" y="1165.60" font-size="12" fill="#ccccdc" stroke="#ccccdc" stroke-width="0.2" text-anchor="middle" textLength="31.00" lengthAdjust="spacingAndGlyphs">19:20</text><text x="1123.30" y="1165.60" font-size="12" fill="#ccccdc" stroke="#ccccdc" stroke-width="0.2" text-anchor="middle" textLength="31.00" lengthAdjust="spacingAndGlyphs">19:30</text><text x="1208.70" y="1165.60" font-size="12" fill="#ccccdc" stroke="#ccccdc" stroke-width="0.2" text-anchor="middle" textLength="31.00" lengthAdjust="spacingAndGlyphs">19:40</text><text x="1361.20" y="983.20" font-size="12" fill="#ccccdc" stroke="#ccccdc" stroke-width="0.2" text-anchor="end" textLength="40.80" lengthAdjust="spacingAndGlyphs">1 ops/s</text><text x="1361.20" y="1025.20" font-size="12" fill="#ccccdc" stroke="#ccccdc" stroke-width="0.2" text-anchor="end" textLength="66.90" lengthAdjust="spacingAndGlyphs">0.500 ops/s</text><text x="1361.20" y="1067.20" font-size="12" fill="#ccccdc" stroke="#ccccdc" stroke-width="0.2" text-anchor="end" textLength="41.30" lengthAdjust="spacingAndGlyphs">0 ops/s</text><text x="1361.20" y="1109.20" font-size="12" fill="#ccccdc" stroke="#ccccdc" stroke-width="0.2" text-anchor="end" textLength="72.80" lengthAdjust="spacingAndGlyphs">-0.500 ops/s</text><text x="1361.20" y="1151.20" font-size="12" fill="#ccccdc" stroke="#ccccdc" stroke-width="0.2" text-anchor="end" textLength="45.00" lengthAdjust="spacingAndGlyphs">-1 ops/s</text><text x="1415.70" y="1165.60" font-size="12" fill="#ccccdc" stroke="#ccccdc" stroke-width="0.2" text-anchor="middle" textLength="31.00" lengthAdjust="spacingAndGlyphs">18:50</text><text x="1501.10" y="1165.60" font-size="12" fill="#ccccdc" stroke="#ccccdc" stroke-width="0.2" text-anchor="middle" textLength="31.00" lengthAdjust="spacingAndGlyphs">19:00</text><text x="1586.50" y="1165.60" font-size="12" fill="#ccccdc" stroke="#ccccdc" stroke-width="0.2" text-anchor="middle" textLength="31.00" lengthAdjust="spacingAndGlyphs">19:10</text><text x="1671.90" y="1165.60" font-size="12" fill="#ccccdc" stroke="#ccccdc" stroke-width="0.2" text-anchor="middle" textLength="31.00" lengthAdjust="spacingAndGlyphs">19:20</text><text x="1757.30" y="1165.60" font-size="12" fill="#ccccdc" stroke="#ccccdc" stroke-width="0.2" text-anchor="middle" textLength="31.00" lengthAdjust="spacingAndGlyphs">19:30</text><text x="1842.70" y="1165.60" font-size="12" fill="#ccccdc" stroke="#ccccdc" stroke-width="0.2" text-anchor="middle" textLength="31.00" lengthAdjust="spacingAndGlyphs">19:40</text><text x="1995.20" y="983.20" font-size="12" fill="#ccccdc" stroke="#ccccdc" stroke-width="0.2" text-anchor="end" textLength="40.80" lengthAdjust="spacingAndGlyphs">1 ops/s</text><text x="1995.20" y="1025.20" font-size="12" fill="#ccccdc" stroke="#ccccdc" stroke-width="0.2" text-anchor="end" textLength="66.90" lengthAdjust="spacingAndGlyphs">0.500 ops/s</text><text x="1995.20" y="1067.20" font-size="12" fill="#ccccdc" stroke="#ccccdc" stroke-width="0.2" text-anchor="end" textLength="41.30" lengthAdjust="spacingAndGlyphs">0 ops/s</text><text x="1995.20" y="1109.20" font-size="12" fill="#ccccdc" stroke="#ccccdc" stroke-width="0.2" text-anchor="end" textLength="72.80" lengthAdjust="spacingAndGlyphs">-0.500 ops/s</text><text x="1995.20" y="1151.20" font-size="12" fill="#ccccdc" stroke="#ccccdc" stroke-width="0.2" text-anchor="end" textLength="45.00" lengthAdjust="spacingAndGlyphs">-1 ops/s</text><text x="2049.70" y="1165.60" font-size="12" fill="#ccccdc" stroke="#ccccdc" stroke-width="0.2" text-anchor="middle" textLength="31.00" lengthAdjust="spacingAndGlyphs">18:50</text><text x="2135.10" y="1165.60" font-size="12" fill="#ccccdc" stroke="#ccccdc" stroke-width="0.2" text-anchor="middle" textLength="31.00" lengthAdjust="spacingAndGlyphs">19:00</text><text x="2220.50" y="1165.60" font-size="12" fill="#ccccdc" stroke="#ccccdc" stroke-width="0.2" text-anchor="middle" textLength="31.00" lengthAdjust="spacingAndGlyphs">19:10</text><text x="2305.90" y="1165.60" font-size="12" fill="#ccccdc" stroke="#ccccdc" stroke-width="0.2" text-anchor="middle" textLength="31.00" lengthAdjust="spacingAndGlyphs">19:20</text><text x="2391.30" y="1165.60" font-size="12" fill="#ccccdc" stroke="#ccccdc" stroke-width="0.2" text-anchor="middle" textLength="31.00" lengthAdjust="spacingAndGlyphs">19:30</text><text x="2476.70" y="1165.60" font-size="12" fill="#ccccdc" stroke="#ccccdc" stroke-width="0.2" text-anchor="middle" textLength="31.00" lengthAdjust="spacingAndGlyphs">19:40</text></svg>
</body></html>
